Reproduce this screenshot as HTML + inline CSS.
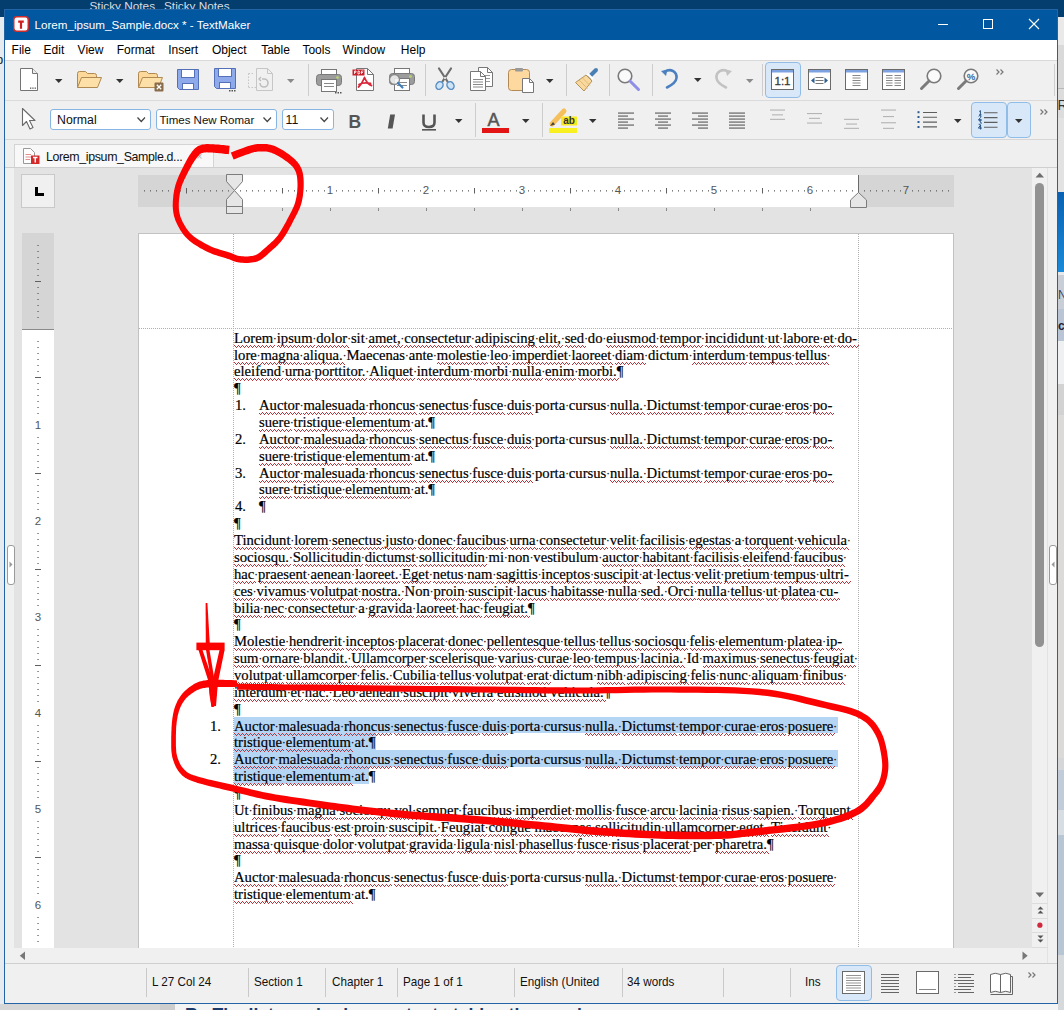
<!DOCTYPE html>
<html><head><meta charset="utf-8"><title>TextMaker</title><style>
*{margin:0;padding:0;box-sizing:border-box}
html,body{width:1064px;height:1010px;overflow:hidden}
body{position:relative;background:#dad8d6;font-family:"Liberation Sans",sans-serif}
.a{position:absolute}
.t{position:absolute;white-space:pre}
svg{overflow:visible}
.dl{position:absolute;white-space:pre;font-family:"Liberation Serif",serif;font-size:14.667px;line-height:16.87px;color:#000;-webkit-text-stroke:0.2px #000}
.dl u{text-decoration:none}
.dl b{font-weight:normal;font-size:11.005px;position:relative;top:-0.5px}
</style></head><body>
<div class="a" style="left:0px;top:0px;width:1064px;height:17px;background:#043e6e"></div>
<div class="t" style="left:89.50px;top:-0.59px;font-size:11.8px;line-height:15px;color:#d6dee6;font-family:'Liberation Sans',sans-serif;">Sticky Notes</div>
<div class="t" style="left:164.00px;top:-0.59px;font-size:11.8px;line-height:15px;color:#d6dee6;font-family:'Liberation Sans',sans-serif;">Sticky Notes</div>
<div class="a" style="left:0px;top:17px;width:4px;height:993px;background:#e6ebf0"></div>
<div class="a" style="left:0;top:40px;width:4px;height:30px;overflow:hidden"><div class="t" style="left:-4px;top:11px;font-size:13px;line-height:17px;color:#222;font-family:'Liberation Sans',sans-serif">p</div></div>
<div class="a" style="left:1058px;top:17px;width:6px;height:28px;background:#e9e9e9"></div>
<div class="a" style="left:1058px;top:45px;width:6px;height:43px;background:#d9d9d9"></div>
<div class="a" style="left:1058px;top:88px;width:6px;height:1px;background:#b8b8b8"></div>
<div class="a" style="left:1058px;top:89px;width:6px;height:29px;background:#dcdcdc"></div>
<div class="a" style="left:1058px;top:118px;width:6px;height:74px;background:#e2e2e2"></div>
<div class="a" style="left:1058px;top:192px;width:6px;height:80px;background:linear-gradient(#0a60b0,#1a8ad8)"></div>
<div class="a" style="left:1058px;top:272px;width:6px;height:3px;background:#e8e8e8"></div>
<div class="a" style="left:1058px;top:275px;width:6px;height:34px;background:#c9ced6"></div>
<div class="a" style="left:1058px;top:309px;width:6px;height:32px;background:#b9c5d5"></div>
<div class="a" style="left:1058px;top:341px;width:6px;height:43px;background:#eef0f2"></div>
<div class="a" style="left:1058px;top:384px;width:6px;height:31px;background:#d2d2d2"></div>
<div class="a" style="left:1058px;top:415px;width:6px;height:343px;background:#dcdad8"></div>
<div class="a" style="left:1058px;top:758px;width:6px;height:12px;background:#d4d6d8"></div>
<div class="a" style="left:1058px;top:770px;width:6px;height:40px;background:#c2ccd8"></div>
<div class="a" style="left:1058px;top:810px;width:6px;height:25px;background:#d8dde2"></div>
<div class="a" style="left:1058px;top:835px;width:6px;height:120px;background:#b8c6d4"></div>
<div class="a" style="left:1058px;top:955px;width:6px;height:55px;background:#d6d9dc"></div>
<div class="t" style="left:1057.50px;top:95.65px;font-size:14px;line-height:18px;color:#333;font-family:'Liberation Sans',sans-serif;">R</div>
<div class="t" style="left:1058.00px;top:286.84px;font-size:12px;line-height:16px;color:#445;font-family:'Liberation Sans',sans-serif;">N</div>
<div class="t" style="left:1058.00px;top:317.84px;font-size:12px;line-height:16px;color:#223;font-family:'Liberation Sans',sans-serif;font-weight:bold">c</div>
<div class="a" style="left:0px;top:1004px;width:160px;height:6px;background:#d6d6d6"></div>
<div class="a" style="left:160px;top:1004px;width:15px;height:6px;background:#cdcdcd"></div>
<div class="a" style="left:175px;top:1004px;width:883px;height:6px;background:#f4f4f4"></div>
<div class="t" style="left:185.00px;top:1004.40px;font-size:17.6px;line-height:23px;color:#1d3b6a;font-family:'Liberation Sans',sans-serif;font-weight:bold">Re The list numbering contents tables the numb</div>
<div class="a" style="left:4px;top:9px;width:1054px;height:995px;background:#f0f0f0;border:1px solid #2464a4"></div>
<div class="a" style="left:5px;top:10px;width:1052px;height:30px;background:#0157a0"></div>
<svg class="a" style="left:13px;top:16px;" width="16" height="16" viewBox="0 0 16 16"><rect x="0.75" y="0.75" width="14.5" height="14.5" rx="3" fill="#fff" stroke="#d02c2c" stroke-width="1.5"/><path d="M5.2 4.5h5.6v2.2H9.1v6H6.9v-6H5.2z" fill="#d01f1f"/></svg>
<div class="t" style="left:34.50px;top:17.06px;font-size:11.65px;line-height:15px;color:#fff;font-family:'Liberation Sans',sans-serif;">Lorem_ipsum_Sample.docx * - TextMaker</div>
<div class="a" style="left:938px;top:24px;width:10px;height:1px;background:#fff"></div>
<div class="a" style="left:983px;top:19px;width:10px;height:10px;border:1px solid #fff"></div>
<svg class="a" style="left:1029px;top:19px;" width="10" height="10" viewBox="0 0 10 10"><path d="M0 0L10 10M10 0L0 10" stroke="#fff" stroke-width="1.1"/></svg>
<div class="a" style="left:5px;top:40px;width:1052px;height:20px;background:#fff"></div>
<div class="a" style="left:5px;top:60px;width:1052px;height:1px;background:#d9d9d9"></div>
<div class="t" style="left:11.60px;top:41.84px;font-size:12px;line-height:16px;color:#000;font-family:'Liberation Sans',sans-serif;">File</div>
<div class="t" style="left:43.60px;top:41.84px;font-size:12px;line-height:16px;color:#000;font-family:'Liberation Sans',sans-serif;">Edit</div>
<div class="t" style="left:77.60px;top:41.84px;font-size:12px;line-height:16px;color:#000;font-family:'Liberation Sans',sans-serif;">View</div>
<div class="t" style="left:116.70px;top:41.84px;font-size:12px;line-height:16px;color:#000;font-family:'Liberation Sans',sans-serif;">Format</div>
<div class="t" style="left:168.20px;top:41.84px;font-size:12px;line-height:16px;color:#000;font-family:'Liberation Sans',sans-serif;">Insert</div>
<div class="t" style="left:211.90px;top:41.84px;font-size:12px;line-height:16px;color:#000;font-family:'Liberation Sans',sans-serif;">Object</div>
<div class="t" style="left:261.20px;top:41.84px;font-size:12px;line-height:16px;color:#000;font-family:'Liberation Sans',sans-serif;">Table</div>
<div class="t" style="left:302.40px;top:41.84px;font-size:12px;line-height:16px;color:#000;font-family:'Liberation Sans',sans-serif;">Tools</div>
<div class="t" style="left:342.60px;top:41.84px;font-size:12px;line-height:16px;color:#000;font-family:'Liberation Sans',sans-serif;">Window</div>
<div class="t" style="left:400.80px;top:41.84px;font-size:12px;line-height:16px;color:#000;font-family:'Liberation Sans',sans-serif;">Help</div>
<div class="a" style="left:5px;top:100px;width:1052px;height:1px;background:#dadada"></div>
<div class="a" style="left:5px;top:139px;width:1052px;height:1px;background:#d6d6d6"></div>
<svg class="a" style="left:19px;top:67px;" width="20" height="25" viewBox="0 0 20 25"><path d="M1.5 1.5H13.5L18.5 6.5V23.5H1.5Z" fill="#fff" stroke="#747474" stroke-width="1"/><path d="M13.5 1.5V6.5H18.5" fill="#eee" stroke="#747474" stroke-width="1"/><rect x="11" y="20.5" width="1.3" height="1.3" fill="#555"/><rect x="13.3" y="20.5" width="1.3" height="1.3" fill="#555"/><rect x="15.6" y="20.5" width="1.3" height="1.3" fill="#555"/></svg>
<svg class="a" style="left:55px;top:79px;" width="8" height="5" viewBox="0 0 8 5"><path d="M0 0H7.5L3.75 4z" fill="#333"/></svg>
<svg class="a" style="left:76px;top:70px;" width="27" height="20" viewBox="0 0 27 20"><path d="M1.5 17.5V3.5Q1.5 1.5 3.5 1.5H9.5L11.5 3.5H18.5Q20.5 3.5 20.5 5.5V7.5" fill="#fcd99a" stroke="#b08a52" stroke-width="1"/><path d="M1.5 17.5L5.5 7.5H25.5L21.5 17.5Z" fill="#fde0a8" stroke="#b08a52" stroke-width="1" stroke-linejoin="round"/></svg>
<svg class="a" style="left:116px;top:79px;" width="8" height="5" viewBox="0 0 8 5"><path d="M0 0H7.5L3.75 4z" fill="#333"/></svg>
<svg class="a" style="left:137px;top:70px;" width="28" height="22" viewBox="0 0 28 22"><path d="M1.5 17.5V3.5Q1.5 1.5 3.5 1.5H9.5L11.5 3.5H18.5Q20.5 3.5 20.5 5.5V7.5" fill="#fcd99a" stroke="#b08a52"/><path d="M1.5 17.5L5.5 7.5H25.5L21.5 17.5Z" fill="#fde0a8" stroke="#b08a52" stroke-linejoin="round"/><rect x="17.5" y="12.5" width="9" height="9" rx="1" fill="#8a6c4a"/><path d="M19.8 14.8L24.2 19.2M24.2 14.8L19.8 19.2" stroke="#fff" stroke-width="1.3"/></svg>
<svg class="a" style="left:176.5px;top:68.5px;" width="22" height="24" viewBox="0 0 22 24"><path d="M0.5 0.5H21.5V20.5H2.5L0.5 18.5Z" fill="#8eaaea" stroke="#5470b8"/><rect x="4.5" y="0.5" width="13" height="8" fill="#fff" stroke="#5470b8"/><rect x="5.5" y="14.5" width="11" height="6" fill="#fff" stroke="#5470b8"/></svg>
<svg class="a" style="left:213.5px;top:68px;" width="22" height="24" viewBox="0 0 22 24"><path d="M0.5 0.5H21.5V20.5H2.5L0.5 18.5Z" fill="#8eaaea" stroke="#5470b8"/><rect x="4.5" y="0.5" width="13" height="8" fill="#fff" stroke="#5470b8"/><rect x="5.5" y="14.5" width="11" height="6" fill="#fff" stroke="#5470b8"/><rect x="15" y="22" width="1.5" height="1.5" fill="#555"/><rect x="17.5" y="22" width="1.5" height="1.5" fill="#555"/><rect x="20" y="22" width="1.5" height="1.5" fill="#555"/></svg>
<svg class="a" style="left:248px;top:68px;" width="26" height="24" viewBox="0 0 26 24"><path d="M8.5 0.5H19.5L24.5 5.5V22.5H8.5Z" fill="none" stroke="#c6c6c6"/><path d="M19.5 0.5V5.5H24.5" fill="none" stroke="#c6c6c6"/><path d="M0.5 5.5H6M0.5 5.5V19.5M0.5 19.5H8" stroke="#c6c6c6" stroke-dasharray="1.5 1.5"/><path d="M12 15a4 4 0 1 0 4-4h-2" fill="none" stroke="#bdbdbd" stroke-width="1.6"/><path d="M13 9l-2 2 2 2" fill="none" stroke="#bdbdbd" stroke-width="1.4"/></svg>
<svg class="a" style="left:287px;top:79px;" width="8" height="5" viewBox="0 0 8 5"><path d="M0 0H7.5L3.75 4z" fill="#8a8a8a"/></svg>
<div class="a" style="left:308px;top:64px;width:1px;height:32px;background:#cdcdcd"></div>
<svg class="a" style="left:316px;top:68.5px;" width="27" height="25" viewBox="0 0 27 25"><rect x="5.5" y="0.5" width="15" height="7" fill="#fff" stroke="#777"/><rect x="0.5" y="5.5" width="25" height="11" rx="3" fill="#9c9c9c" stroke="#7a7a7a"/><circle cx="21.5" cy="8.5" r="1.3" fill="#b8d86a"/><rect x="5.5" y="10.5" width="15" height="12" fill="#fff" stroke="#777"/><path d="M8 14.5H18M8 17.5H18" stroke="#888"/><rect x="19" y="23" width="1.5" height="1.5" fill="#555"/><rect x="21.5" y="23" width="1.5" height="1.5" fill="#555"/><rect x="24" y="23" width="1.5" height="1.5" fill="#555"/></svg>
<svg class="a" style="left:352px;top:67px;" width="24" height="25" viewBox="0 0 24 25"><path d="M4.5 1.5H15.5L21.5 7.5V23.5H4.5Z" fill="#fff" stroke="#777"/><path d="M15.5 1.5V7.5H21.5" fill="none" stroke="#777"/><rect x="0.5" y="2.5" width="12" height="6" fill="#c8202a"/><path d="M2.5 4v3M2.5 4h1.5v1.3H2.5M6 4v3h1.2l0.6-1.5L7.2 4Z M9.5 4v3M9.5 4h2M9.5 5.5h1.5" stroke="#fff" stroke-width="0.8" fill="none"/><path d="M12.5 10.5C11 14 9 18 6.5 20M12.5 10.5C14 14 16.5 18 19.5 18.5M7 17.5C10 16 14 15.5 18.5 16.5" fill="none" stroke="#d8283a" stroke-width="1.8" stroke-linecap="round"/></svg>
<svg class="a" style="left:389px;top:68px;" width="27" height="25" viewBox="0 0 27 25"><rect x="5.5" y="0.5" width="15" height="7" fill="#fff" stroke="#777"/><rect x="0.5" y="5.5" width="25" height="11" rx="3" fill="#9c9c9c" stroke="#7a7a7a"/><circle cx="21.5" cy="8.5" r="1.3" fill="#b8d86a"/><rect x="5.5" y="10.5" width="15" height="12" fill="#fff" stroke="#777"/><path d="M8 14.5H18M8 17.5H18" stroke="#888"/><circle cx="5.5" cy="11.5" r="5" fill="#f2f2f2" fill-opacity="0.85" stroke="#888" stroke-width="1.3"/><path d="M9 15L13.5 19.5" stroke="#3d7ec0" stroke-width="2.2" stroke-linecap="round"/></svg>
<div class="a" style="left:425px;top:64px;width:1px;height:32px;background:#cdcdcd"></div>
<svg class="a" style="left:434px;top:67px;" width="22" height="24" viewBox="0 0 22 24"><path d="M5 1.5L13.5 14.5M17 1.5L8.5 14.5" stroke="#6e6e6e" stroke-width="2.2" stroke-linecap="round"/><ellipse cx="5.5" cy="18.5" rx="3.3" ry="4" transform="rotate(35 5.5 18.5)" fill="#cfe5f7" stroke="#5a8fc4" stroke-width="1.5"/><ellipse cx="16.5" cy="18.5" rx="3.3" ry="4" transform="rotate(-35 16.5 18.5)" fill="#cfe5f7" stroke="#5a8fc4" stroke-width="1.5"/><circle cx="11" cy="11" r="1" fill="#fff"/></svg>
<svg class="a" style="left:470px;top:67px;" width="24" height="25" viewBox="0 0 24 25"><path d="M8.5 0.5H17.5L22.5 5.5V19.5H8.5Z" fill="#fff" stroke="#777"/><path d="M17.5 0.5V5.5H22.5" fill="none" stroke="#777"/><path d="M11 8.5H20M11 11.5H20M11 14.5H20" stroke="#999"/><path d="M0.5 4.5H10.5L15.5 9.5V23.5H0.5Z" fill="#fff" stroke="#777"/><path d="M10.5 4.5V9.5H15.5" fill="none" stroke="#777"/><path d="M3 12.5H13M3 15H13M3 17.5H13M3 20H13" stroke="#888"/></svg>
<svg class="a" style="left:507px;top:67px;" width="28" height="27" viewBox="0 0 28 27"><rect x="1.5" y="2.5" width="21" height="21" rx="3" fill="#fdd9a0" stroke="#b28a55"/><rect x="8" y="1" width="8" height="3.5" rx="1" fill="#9a9a9a"/><path d="M15.5 11.5H22.5L26.5 15.5V25.5H15.5Z" fill="#fff" stroke="#777"/><path d="M22.5 11.5V15.5H26.5" fill="none" stroke="#777"/></svg>
<svg class="a" style="left:546px;top:79px;" width="8" height="5" viewBox="0 0 8 5"><path d="M0 0H7.5L3.75 4z" fill="#333"/></svg>
<div class="a" style="left:566px;top:64px;width:1px;height:32px;background:#cdcdcd"></div>
<svg class="a" style="left:574px;top:67px;" width="26" height="26" viewBox="0 0 26 26"><path d="M16 9L22 3" stroke="#4a7fb4" stroke-width="4" stroke-linecap="round"/><path d="M13 7.5L18.5 13" stroke="#fff" stroke-width="4"/><path d="M13.5 8.5L17.5 12.5" stroke="#aaa" stroke-width="0.8" fill="none"/><path d="M12 8L18 14L10 24L1.5 15.5Z" fill="#f8d89c" stroke="#b69258" stroke-linejoin="round"/><path d="M5 13L13.5 21.5M8 10.5L16 18.5" stroke="#d8b470" stroke-width="0.8"/></svg>
<div class="a" style="left:609px;top:64px;width:1px;height:32px;background:#cdcdcd"></div>
<svg class="a" style="left:617px;top:68px;" width="25" height="25" viewBox="0 0 25 25"><circle cx="8" cy="8" r="6.8" fill="#fafafa" stroke="#7a7a7a" stroke-width="1.6"/><path d="M13 13L21.5 21.5" stroke="#8e8ee6" stroke-width="3" stroke-linecap="round"/></svg>
<div class="a" style="left:652px;top:64px;width:1px;height:32px;background:#cdcdcd"></div>
<svg class="a" style="left:660px;top:68px;" width="20" height="21" viewBox="0 0 20 21"><path d="M5 3.5C11 0 17 4 16.5 10C16 15 11 17.5 7 19.5" fill="none" stroke="#4a80c0" stroke-width="2.6" stroke-linecap="round"/><path d="M1 3L7.5 1.5L6 8Z" fill="#4a80c0"/></svg>
<svg class="a" style="left:694px;top:78px;" width="8" height="5" viewBox="0 0 8 5"><path d="M0 0H7.5L3.75 4z" fill="#333"/></svg>
<svg class="a" style="left:713px;top:68px;" width="20" height="21" viewBox="0 0 20 21"><path d="M15 3.5C9 0 3 4 3.5 10C4 15 9 17.5 13 19.5" fill="none" stroke="#c2c2c2" stroke-width="2.6" stroke-linecap="round"/><path d="M19 3L12.5 1.5L14 8Z" fill="#c2c2c2"/></svg>
<svg class="a" style="left:746px;top:79px;" width="8" height="5" viewBox="0 0 8 5"><path d="M0 0H7.5L3.75 4z" fill="#8a8a8a"/></svg>
<div class="a" style="left:762px;top:64px;width:1px;height:32px;background:#cdcdcd"></div>
<div class="a" style="left:765px;top:62px;width:36px;height:36px;background:#d9e8f8;border:1px solid #90bce8;border-radius:4px"></div>
<svg class="a" style="left:771px;top:69px;" width="24" height="21" viewBox="0 0 24 21"><rect x="0.5" y="0.5" width="22" height="20" fill="#fff" stroke="#6a6a6a"/><rect x="1" y="1" width="21" height="2.5" fill="#7da2e2"/><text x="11.5" y="16" font-family="Liberation Sans" font-size="11.5" fill="#3a3a3a" text-anchor="middle" stroke="#3a3a3a" stroke-width="0.3">1:1</text></svg>
<svg class="a" style="left:808px;top:69px;" width="24" height="21" viewBox="0 0 24 21"><rect x="0.5" y="0.5" width="22" height="20" fill="#fff" stroke="#6a6a6a"/><rect x="1" y="1" width="21" height="2.5" fill="#7da2e2"/><path d="M3 11.5L6.5 8.5V14.5Z M20 11.5L16.5 8.5V14.5Z" fill="#2f5f8f"/><path d="M7.5 8.5H15.5M7.5 11.5H15.5M7.5 14.5H15.5" stroke="#777"/></svg>
<svg class="a" style="left:845px;top:69px;" width="24" height="21" viewBox="0 0 24 21"><rect x="0.5" y="0.5" width="22" height="20" fill="#fff" stroke="#6a6a6a"/><rect x="1" y="1" width="21" height="2.5" fill="#7da2e2"/><path d="M7.5 6.5H15.5M7.5 9H15.5M7.5 11.5H15.5M7.5 14H15.5M7.5 16.5H15.5" stroke="#888"/></svg>
<svg class="a" style="left:882px;top:69px;" width="24" height="21" viewBox="0 0 24 21"><rect x="0.5" y="0.5" width="22" height="20" fill="#fff" stroke="#6a6a6a"/><rect x="1" y="1" width="21" height="2.5" fill="#7da2e2"/><path d="M4 6.5H10.5M4 9H10.5M4 11.5H10.5M4 14H10.5M4 16.5H10.5M12.5 6.5H19M12.5 9H19M12.5 11.5H19M12.5 14H19M12.5 16.5H19" stroke="#888"/></svg>
<svg class="a" style="left:919px;top:68px;" width="24" height="24" viewBox="0 0 24 24"><circle cx="15" cy="8" r="6.8" fill="#fafafa" stroke="#7a7a7a" stroke-width="1.6"/><path d="M10 13L2.5 20.5" stroke="#7a7a7a" stroke-width="3" stroke-linecap="round"/></svg>
<svg class="a" style="left:956px;top:68px;" width="24" height="24" viewBox="0 0 24 24"><circle cx="15" cy="8" r="6.8" fill="#fafafa" stroke="#7a7a7a" stroke-width="1.6"/><path d="M10 13L2.5 20.5" stroke="#7a7a7a" stroke-width="3" stroke-linecap="round"/><text x="15" y="11.5" font-family="Liberation Sans" font-size="9.5" fill="#2f6fae" text-anchor="middle" stroke="#2f6fae" stroke-width="0.3">%</text></svg>
<svg class="a" style="left:996px;top:69px;" width="8" height="6" viewBox="0 0 8 6"><path d="M0.5 0.5L3 3L0.5 5.5M4.5 0.5L7 3L4.5 5.5" fill="none" stroke="#777" stroke-width="1.2"/></svg>
<div class="a" style="left:1054px;top:64px;width:1px;height:32px;background:#d0d0d0"></div>
<svg class="a" style="left:21px;top:107px;" width="16" height="24" viewBox="0 0 16 24"><path d="M1.5 1.5V18.5L5.5 14.5L9 22L12 20.5L8.5 13.5H14Z" fill="#fff" stroke="#6a6a6a" stroke-width="1.1" stroke-linejoin="round"/></svg>
<div class="a" style="left:50px;top:109px;width:101px;height:21px;background:#fff;border:1px solid #88b6e4;border-radius:3px"></div>
<div class="t" style="left:57.00px;top:111.74px;font-size:12.3px;line-height:16px;color:#111;font-family:'Liberation Sans',sans-serif;">Normal</div>
<svg class="a" style="left:136.5px;top:117.2px;" width="9" height="6" viewBox="0 0 9 6"><path d="M0.5 0.5L4.25 4.5L8 0.5" fill="none" stroke="#444" stroke-width="1.2"/></svg>
<div class="a" style="left:156px;top:109px;width:121px;height:21px;background:#fff;border:1px solid #88b6e4;border-radius:3px"></div>
<div class="t" style="left:159.50px;top:112.52px;font-size:11.5px;line-height:15px;color:#111;font-family:'Liberation Sans',sans-serif;">Times New Romar</div>
<svg class="a" style="left:262.5px;top:117.2px;" width="9" height="6" viewBox="0 0 9 6"><path d="M0.5 0.5L4.25 4.5L8 0.5" fill="none" stroke="#444" stroke-width="1.2"/></svg>
<div class="a" style="left:282px;top:109px;width:52px;height:21px;background:#fff;border:1px solid #88b6e4;border-radius:3px"></div>
<div class="t" style="left:285.50px;top:111.74px;font-size:12.3px;line-height:16px;color:#111;font-family:'Liberation Sans',sans-serif;">11</div>
<svg class="a" style="left:319.5px;top:117.2px;" width="9" height="6" viewBox="0 0 9 6"><path d="M0.5 0.5L4.25 4.5L8 0.5" fill="none" stroke="#444" stroke-width="1.2"/></svg>
<div class="t" style="left:348.50px;top:110.84px;font-size:17.5px;line-height:23px;color:#555;font-family:'Liberation Sans',sans-serif;font-weight:bold">B</div>
<svg class="a" style="left:386px;top:114px;" width="12" height="15" viewBox="0 0 12 15"><path d="M4.2 0.5H9L6.6 14.5H1.8Z" fill="#555"/></svg>
<svg class="a" style="left:421px;top:114px;" width="16" height="17" viewBox="0 0 16 17"><path d="M2.5 0.5V8.5Q2.5 13 8 13Q13.5 13 13.5 8.5V0.5" fill="none" stroke="#555" stroke-width="2.6"/><rect x="1" y="15" width="14" height="1.6" fill="#555"/></svg>
<svg class="a" style="left:455px;top:119px;" width="8" height="5" viewBox="0 0 8 5"><path d="M0 0H7.5L3.75 4z" fill="#333"/></svg>
<div class="a" style="left:475px;top:103px;width:1px;height:34px;background:#cdcdcd"></div>
<div class="t" style="left:487.50px;top:109.46px;font-size:18px;line-height:23px;color:#555;font-family:'Liberation Sans',sans-serif;-webkit-text-stroke:0.5px #555">A</div>
<div class="a" style="left:482px;top:128px;width:27px;height:4.5px;background:#e31414"></div>
<svg class="a" style="left:522px;top:119px;" width="8" height="5" viewBox="0 0 8 5"><path d="M0 0H7.5L3.75 4z" fill="#333"/></svg>
<div class="a" style="left:542px;top:103px;width:1px;height:34px;background:#cdcdcd"></div>
<svg class="a" style="left:548px;top:108px;" width="30" height="26" viewBox="0 0 30 26"><path d="M4 16L16 3" stroke="#f5c05c" stroke-width="5" stroke-linecap="round"/><path d="M2 18L5 14L7 16.5Z" fill="#444"/><rect x="13" y="8.5" width="16" height="9" fill="#f8ea20"/><text x="21" y="16.2" font-family="Liberation Sans" font-size="10" font-weight="bold" fill="#333" text-anchor="middle">ab</text><rect x="1" y="20" width="28" height="5" fill="#f8f020"/></svg>
<svg class="a" style="left:589px;top:119px;" width="8" height="5" viewBox="0 0 8 5"><path d="M0 0H7.5L3.75 4z" fill="#333"/></svg>
<svg class="a" style="left:617.5px;top:112px;" width="16" height="17" viewBox="0 0 16 17"><rect x="0" y="0.5" width="16" height="1.15" fill="#5e5e5e"/><rect x="0" y="3.5" width="10" height="1.15" fill="#5e5e5e"/><rect x="0" y="6.5" width="16" height="1.15" fill="#5e5e5e"/><rect x="0" y="9.5" width="10" height="1.15" fill="#5e5e5e"/><rect x="0" y="12.5" width="16" height="1.15" fill="#5e5e5e"/><rect x="0" y="15.5" width="10" height="1.15" fill="#5e5e5e"/></svg>
<svg class="a" style="left:654.5px;top:112px;" width="16" height="17" viewBox="0 0 16 17"><rect x="0.0" y="0.5" width="16" height="1.15" fill="#5e5e5e"/><rect x="3.0" y="3.5" width="10" height="1.15" fill="#5e5e5e"/><rect x="0.0" y="6.5" width="16" height="1.15" fill="#5e5e5e"/><rect x="3.0" y="9.5" width="10" height="1.15" fill="#5e5e5e"/><rect x="0.0" y="12.5" width="16" height="1.15" fill="#5e5e5e"/><rect x="3.0" y="15.5" width="10" height="1.15" fill="#5e5e5e"/></svg>
<svg class="a" style="left:691.5px;top:112px;" width="16" height="17" viewBox="0 0 16 17"><rect x="0" y="0.5" width="16" height="1.15" fill="#5e5e5e"/><rect x="6" y="3.5" width="10" height="1.15" fill="#5e5e5e"/><rect x="0" y="6.5" width="16" height="1.15" fill="#5e5e5e"/><rect x="6" y="9.5" width="10" height="1.15" fill="#5e5e5e"/><rect x="0" y="12.5" width="16" height="1.15" fill="#5e5e5e"/><rect x="6" y="15.5" width="10" height="1.15" fill="#5e5e5e"/></svg>
<svg class="a" style="left:728.5px;top:112px;" width="16" height="17" viewBox="0 0 16 17"><rect x="0" y="0.5" width="16" height="1.15" fill="#5e5e5e"/><rect x="0" y="3.5" width="16" height="1.15" fill="#5e5e5e"/><rect x="0" y="6.5" width="16" height="1.15" fill="#5e5e5e"/><rect x="0" y="9.5" width="16" height="1.15" fill="#5e5e5e"/><rect x="0" y="12.5" width="16" height="1.15" fill="#5e5e5e"/><rect x="0" y="15.5" width="16" height="1.15" fill="#5e5e5e"/></svg>
<svg class="a" style="left:770px;top:100px;" width="15" height="32" viewBox="0 0 15 32"><rect x="0" y="9.5" width="15" height="1.1" fill="#b4b4b4"/><rect x="2" y="14.299999999999997" width="11" height="1.1" fill="#b4b4b4"/><rect x="0" y="18.799999999999997" width="15" height="1.1" fill="#b4b4b4"/></svg>
<svg class="a" style="left:806.5px;top:100px;" width="15" height="32" viewBox="0 0 15 32"><rect x="0" y="13" width="15" height="1.1" fill="#b4b4b4"/><rect x="2" y="17.799999999999997" width="11" height="1.1" fill="#b4b4b4"/><rect x="0" y="22.5" width="15" height="1.1" fill="#b4b4b4"/></svg>
<svg class="a" style="left:844px;top:100px;" width="15" height="32" viewBox="0 0 15 32"><rect x="0" y="18.799999999999997" width="15" height="1.1" fill="#b4b4b4"/><rect x="2" y="23.5" width="11" height="1.1" fill="#b4b4b4"/><rect x="0" y="27.799999999999997" width="15" height="1.1" fill="#b4b4b4"/></svg>
<svg class="a" style="left:881px;top:100px;" width="15" height="32" viewBox="0 0 15 32"><rect x="0" y="9.5" width="15" height="1.1" fill="#b4b4b4"/><rect x="2" y="16" width="11" height="1.1" fill="#b4b4b4"/><rect x="0" y="22.200000000000003" width="15" height="1.1" fill="#b4b4b4"/><rect x="2" y="27.799999999999997" width="11" height="1.1" fill="#b4b4b4"/></svg>
<svg class="a" style="left:917px;top:110px;" width="21" height="19" viewBox="0 0 21 19"><rect x="0.5" y="1.2" width="2" height="2" fill="#2b5c94"/><rect x="0.5" y="6" width="2" height="2" fill="#2b5c94"/><rect x="0.5" y="11" width="2" height="2" fill="#2b5c94"/><rect x="0.5" y="16" width="2" height="2" fill="#2b5c94"/><path d="M6 2.5H20M6 7.3H20M6 12.1H20M6 16.9H20" stroke="#5e5e5e" stroke-width="1.1"/></svg>
<svg class="a" style="left:954px;top:119px;" width="8" height="5" viewBox="0 0 8 5"><path d="M0 0H7.5L3.75 4z" fill="#333"/></svg>
<div class="a" style="left:971px;top:102px;width:36px;height:36px;background:#d9e8f8;border:1px solid #90bce8;border-radius:4px"></div>
<div class="a" style="left:1007px;top:102px;width:24px;height:36px;background:#d9e8f8;border:1px solid #90bce8;border-radius:4px"></div>
<svg class="a" style="left:977px;top:109px;" width="22" height="22" viewBox="0 0 22 22"><path transform="translate(1 1.3)" d="M1.2 1.2L2.4 0.3V4.6M1 4.6H3.6" fill="none" stroke="#1f4d80" stroke-width="0.95"/><path transform="translate(1 6.1)" d="M0.6 1.2Q1.8 -0.2 3 0.9Q3.4 2 0.6 4.6H3.6" fill="none" stroke="#1f4d80" stroke-width="0.95"/><path transform="translate(1 10.9)" d="M0.6 0.4H3.2L1.8 2Q3.6 2.1 3.3 3.6Q2.6 5 0.6 4.3" fill="none" stroke="#1f4d80" stroke-width="0.95"/><path transform="translate(1 15.7)" d="M2.6 4.8V0.3L0.4 3.4H3.8" fill="none" stroke="#1f4d80" stroke-width="0.95"/><path d="M7 3.8H20.5M7 8.6H20.5M7 13.4H20.5M7 18.2H20.5" stroke="#5e5e5e" stroke-width="1.1"/></svg>
<svg class="a" style="left:1015px;top:119px;" width="8" height="5" viewBox="0 0 8 5"><path d="M0 0H7.5L3.75 4z" fill="#333"/></svg>
<svg class="a" style="left:1040px;top:109px;" width="8" height="6" viewBox="0 0 8 6"><path d="M0.5 0.5L3 3L0.5 5.5M4.5 0.5L7 3L4.5 5.5" fill="none" stroke="#777" stroke-width="1.2"/></svg>
<div class="a" style="left:5px;top:140px;width:1052px;height:27px;background:#efefef"></div>
<div class="a" style="left:5px;top:167px;width:1052px;height:1px;background:#cfcfcf"></div>
<div class="a" style="left:14px;top:144px;width:200px;height:23px;background:#f8f8f8;border:1px solid #d4d4d4;border-bottom:none"></div>
<svg class="a" style="left:22px;top:148px;" width="18" height="17" viewBox="0 0 18 17"><path d="M1.5 0.5H8.5L12.5 4.5V15.5H1.5Z" fill="#fff" stroke="#999"/><path d="M3.5 6.5H9M3.5 9H9M3.5 11.5H8" stroke="#e08080" stroke-width="0.9"/><rect x="9" y="7.5" width="8.5" height="8.5" fill="#d42a2a"/><path d="M11 9.5H15.5M13.25 9.5V14.5" stroke="#fff" stroke-width="1.4"/></svg>
<div class="t" style="left:46.00px;top:149.20px;font-size:12.4px;line-height:16px;color:#111;font-family:'Liberation Sans',sans-serif;letter-spacing:-0.36px">Lorem_ipsum_Sample.d...</div>
<div class="t" style="left:196.50px;top:149.53px;font-size:10px;line-height:13px;color:#b0b0b0;font-family:'Liberation Sans',sans-serif;">×</div>
<div class="a" style="left:14px;top:168px;width:1018px;height:780px;background:#e3e3e3"></div>
<div class="a" style="left:21px;top:174px;width:34px;height:34px;background:#f0f0f0;border:1px solid #c9c9c9"></div>
<div class="a" style="left:35px;top:187px;width:3px;height:9px;background:#000"></div>
<div class="a" style="left:35px;top:193px;width:9px;height:3px;background:#000"></div>
<div class="a" style="left:138px;top:175px;width:816px;height:32px;background:#d5d5d5"></div>
<div class="a" style="left:234px;top:175px;width:624px;height:32px;background:#fff"></div>
<svg class="a" style="left:138px;top:175px;" width="817" height="32" viewBox="0 0 817 32"><rect x="6" y="15.2" width="1" height="1.3" fill="#606060"/><rect x="12" y="15.2" width="1" height="1.3" fill="#606060"/><rect x="18" y="15.2" width="1" height="1.3" fill="#606060"/><rect x="24" y="15.2" width="1" height="1.3" fill="#606060"/><rect x="30" y="15.2" width="1" height="1.3" fill="#606060"/><rect x="36" y="15.2" width="1" height="1.3" fill="#606060"/><rect x="42" y="15.2" width="1" height="1.3" fill="#606060"/><rect x="48" y="13" width="1" height="5.5" fill="#606060"/><rect x="54" y="15.2" width="1" height="1.3" fill="#606060"/><rect x="60" y="15.2" width="1" height="1.3" fill="#606060"/><rect x="66" y="15.2" width="1" height="1.3" fill="#606060"/><rect x="72" y="15.2" width="1" height="1.3" fill="#606060"/><rect x="78" y="15.2" width="1" height="1.3" fill="#606060"/><rect x="84" y="15.2" width="1" height="1.3" fill="#606060"/><rect x="90" y="15.2" width="1" height="1.3" fill="#606060"/><rect x="102" y="15.2" width="1" height="1.3" fill="#606060"/><rect x="108" y="15.2" width="1" height="1.3" fill="#606060"/><rect x="114" y="15.2" width="1" height="1.3" fill="#606060"/><rect x="120" y="15.2" width="1" height="1.3" fill="#606060"/><rect x="126" y="15.2" width="1" height="1.3" fill="#606060"/><rect x="132" y="15.2" width="1" height="1.3" fill="#606060"/><rect x="138" y="15.2" width="1" height="1.3" fill="#606060"/><rect x="144" y="13" width="1" height="5.5" fill="#606060"/><rect x="150" y="15.2" width="1" height="1.3" fill="#606060"/><rect x="156" y="15.2" width="1" height="1.3" fill="#606060"/><rect x="162" y="15.2" width="1" height="1.3" fill="#606060"/><rect x="168" y="15.2" width="1" height="1.3" fill="#606060"/><rect x="174" y="15.2" width="1" height="1.3" fill="#606060"/><rect x="180" y="15.2" width="1" height="1.3" fill="#606060"/><rect x="186" y="15.2" width="1" height="1.3" fill="#606060"/><rect x="198" y="15.2" width="1" height="1.3" fill="#606060"/><rect x="204" y="15.2" width="1" height="1.3" fill="#606060"/><rect x="210" y="15.2" width="1" height="1.3" fill="#606060"/><rect x="216" y="15.2" width="1" height="1.3" fill="#606060"/><rect x="222" y="15.2" width="1" height="1.3" fill="#606060"/><rect x="228" y="15.2" width="1" height="1.3" fill="#606060"/><rect x="234" y="15.2" width="1" height="1.3" fill="#606060"/><rect x="240" y="13" width="1" height="5.5" fill="#606060"/><rect x="246" y="15.2" width="1" height="1.3" fill="#606060"/><rect x="252" y="15.2" width="1" height="1.3" fill="#606060"/><rect x="258" y="15.2" width="1" height="1.3" fill="#606060"/><rect x="264" y="15.2" width="1" height="1.3" fill="#606060"/><rect x="270" y="15.2" width="1" height="1.3" fill="#606060"/><rect x="276" y="15.2" width="1" height="1.3" fill="#606060"/><rect x="282" y="15.2" width="1" height="1.3" fill="#606060"/><rect x="294" y="15.2" width="1" height="1.3" fill="#606060"/><rect x="300" y="15.2" width="1" height="1.3" fill="#606060"/><rect x="306" y="15.2" width="1" height="1.3" fill="#606060"/><rect x="312" y="15.2" width="1" height="1.3" fill="#606060"/><rect x="318" y="15.2" width="1" height="1.3" fill="#606060"/><rect x="324" y="15.2" width="1" height="1.3" fill="#606060"/><rect x="330" y="15.2" width="1" height="1.3" fill="#606060"/><rect x="336" y="13" width="1" height="5.5" fill="#606060"/><rect x="342" y="15.2" width="1" height="1.3" fill="#606060"/><rect x="348" y="15.2" width="1" height="1.3" fill="#606060"/><rect x="354" y="15.2" width="1" height="1.3" fill="#606060"/><rect x="360" y="15.2" width="1" height="1.3" fill="#606060"/><rect x="366" y="15.2" width="1" height="1.3" fill="#606060"/><rect x="372" y="15.2" width="1" height="1.3" fill="#606060"/><rect x="378" y="15.2" width="1" height="1.3" fill="#606060"/><rect x="390" y="15.2" width="1" height="1.3" fill="#606060"/><rect x="396" y="15.2" width="1" height="1.3" fill="#606060"/><rect x="402" y="15.2" width="1" height="1.3" fill="#606060"/><rect x="408" y="15.2" width="1" height="1.3" fill="#606060"/><rect x="414" y="15.2" width="1" height="1.3" fill="#606060"/><rect x="420" y="15.2" width="1" height="1.3" fill="#606060"/><rect x="426" y="15.2" width="1" height="1.3" fill="#606060"/><rect x="432" y="13" width="1" height="5.5" fill="#606060"/><rect x="438" y="15.2" width="1" height="1.3" fill="#606060"/><rect x="444" y="15.2" width="1" height="1.3" fill="#606060"/><rect x="450" y="15.2" width="1" height="1.3" fill="#606060"/><rect x="456" y="15.2" width="1" height="1.3" fill="#606060"/><rect x="462" y="15.2" width="1" height="1.3" fill="#606060"/><rect x="468" y="15.2" width="1" height="1.3" fill="#606060"/><rect x="474" y="15.2" width="1" height="1.3" fill="#606060"/><rect x="486" y="15.2" width="1" height="1.3" fill="#606060"/><rect x="492" y="15.2" width="1" height="1.3" fill="#606060"/><rect x="498" y="15.2" width="1" height="1.3" fill="#606060"/><rect x="504" y="15.2" width="1" height="1.3" fill="#606060"/><rect x="510" y="15.2" width="1" height="1.3" fill="#606060"/><rect x="516" y="15.2" width="1" height="1.3" fill="#606060"/><rect x="522" y="15.2" width="1" height="1.3" fill="#606060"/><rect x="528" y="13" width="1" height="5.5" fill="#606060"/><rect x="534" y="15.2" width="1" height="1.3" fill="#606060"/><rect x="540" y="15.2" width="1" height="1.3" fill="#606060"/><rect x="546" y="15.2" width="1" height="1.3" fill="#606060"/><rect x="552" y="15.2" width="1" height="1.3" fill="#606060"/><rect x="558" y="15.2" width="1" height="1.3" fill="#606060"/><rect x="564" y="15.2" width="1" height="1.3" fill="#606060"/><rect x="570" y="15.2" width="1" height="1.3" fill="#606060"/><rect x="582" y="15.2" width="1" height="1.3" fill="#606060"/><rect x="588" y="15.2" width="1" height="1.3" fill="#606060"/><rect x="594" y="15.2" width="1" height="1.3" fill="#606060"/><rect x="600" y="15.2" width="1" height="1.3" fill="#606060"/><rect x="606" y="15.2" width="1" height="1.3" fill="#606060"/><rect x="612" y="15.2" width="1" height="1.3" fill="#606060"/><rect x="618" y="15.2" width="1" height="1.3" fill="#606060"/><rect x="624" y="13" width="1" height="5.5" fill="#606060"/><rect x="630" y="15.2" width="1" height="1.3" fill="#606060"/><rect x="636" y="15.2" width="1" height="1.3" fill="#606060"/><rect x="642" y="15.2" width="1" height="1.3" fill="#606060"/><rect x="648" y="15.2" width="1" height="1.3" fill="#606060"/><rect x="654" y="15.2" width="1" height="1.3" fill="#606060"/><rect x="660" y="15.2" width="1" height="1.3" fill="#606060"/><rect x="666" y="15.2" width="1" height="1.3" fill="#606060"/><rect x="678" y="15.2" width="1" height="1.3" fill="#606060"/><rect x="684" y="15.2" width="1" height="1.3" fill="#606060"/><rect x="690" y="15.2" width="1" height="1.3" fill="#606060"/><rect x="696" y="15.2" width="1" height="1.3" fill="#606060"/><rect x="702" y="15.2" width="1" height="1.3" fill="#606060"/><rect x="708" y="15.2" width="1" height="1.3" fill="#606060"/><rect x="714" y="15.2" width="1" height="1.3" fill="#606060"/><rect x="720" y="13" width="1" height="5.5" fill="#606060"/><rect x="726" y="15.2" width="1" height="1.3" fill="#606060"/><rect x="732" y="15.2" width="1" height="1.3" fill="#606060"/><rect x="738" y="15.2" width="1" height="1.3" fill="#606060"/><rect x="744" y="15.2" width="1" height="1.3" fill="#606060"/><rect x="750" y="15.2" width="1" height="1.3" fill="#606060"/><rect x="756" y="15.2" width="1" height="1.3" fill="#606060"/><rect x="762" y="15.2" width="1" height="1.3" fill="#606060"/><rect x="774" y="15.2" width="1" height="1.3" fill="#606060"/><rect x="780" y="15.2" width="1" height="1.3" fill="#606060"/><rect x="786" y="15.2" width="1" height="1.3" fill="#606060"/><rect x="792" y="15.2" width="1" height="1.3" fill="#606060"/><rect x="798" y="15.2" width="1" height="1.3" fill="#606060"/><rect x="804" y="15.2" width="1" height="1.3" fill="#606060"/><rect x="810" y="15.2" width="1" height="1.3" fill="#606060"/></svg>
<div class="t" style="left:326.80px;top:183.02px;font-size:11.5px;line-height:15px;color:#555;font-family:'Liberation Sans',sans-serif;">1</div>
<div class="t" style="left:422.80px;top:183.02px;font-size:11.5px;line-height:15px;color:#555;font-family:'Liberation Sans',sans-serif;">2</div>
<div class="t" style="left:518.80px;top:183.02px;font-size:11.5px;line-height:15px;color:#555;font-family:'Liberation Sans',sans-serif;">3</div>
<div class="t" style="left:614.80px;top:183.02px;font-size:11.5px;line-height:15px;color:#555;font-family:'Liberation Sans',sans-serif;">4</div>
<div class="t" style="left:710.80px;top:183.02px;font-size:11.5px;line-height:15px;color:#555;font-family:'Liberation Sans',sans-serif;">5</div>
<div class="t" style="left:806.80px;top:183.02px;font-size:11.5px;line-height:15px;color:#555;font-family:'Liberation Sans',sans-serif;">6</div>
<div class="t" style="left:902.80px;top:183.02px;font-size:11.5px;line-height:15px;color:#555;font-family:'Liberation Sans',sans-serif;">7</div>
<svg class="a" style="left:138px;top:208px;" width="817" height="4" viewBox="0 0 817 4"><rect x="144" y="0" width="1" height="3" fill="#8a8a8a"/><rect x="192" y="0" width="1" height="3" fill="#8a8a8a"/><rect x="240" y="0" width="1" height="3" fill="#8a8a8a"/><rect x="288" y="0" width="1" height="3" fill="#8a8a8a"/><rect x="336" y="0" width="1" height="3" fill="#8a8a8a"/><rect x="384" y="0" width="1" height="3" fill="#8a8a8a"/><rect x="432" y="0" width="1" height="3" fill="#8a8a8a"/><rect x="480" y="0" width="1" height="3" fill="#8a8a8a"/><rect x="528" y="0" width="1" height="3" fill="#8a8a8a"/><rect x="576" y="0" width="1" height="3" fill="#8a8a8a"/><rect x="624" y="0" width="1" height="3" fill="#8a8a8a"/><rect x="672" y="0" width="1" height="3" fill="#8a8a8a"/></svg>
<svg class="a" style="left:225px;top:174px;" width="19" height="41" viewBox="0 0 19 41"><path d="M1.5 0.5H17.5V7.5L9.5 16.5L1.5 7.5Z" fill="#e6e6e6" stroke="#7c7c7c"/><path d="M9.5 16.5L17.5 25.5V32.5H1.5V25.5Z" fill="#e6e6e6" stroke="#7c7c7c"/><rect x="1.5" y="32.5" width="16" height="7" fill="#e6e6e6" stroke="#7c7c7c"/></svg>
<div class="a" style="left:858px;top:175px;width:1px;height:18px;background:#6a6a6a"></div>
<svg class="a" style="left:850px;top:192px;" width="18" height="17" viewBox="0 0 18 17"><path d="M8.5 0.5L16.5 8V15.5H0.5V8Z" fill="#e6e6e6" stroke="#7c7c7c"/></svg>
<div class="a" style="left:22px;top:233px;width:32px;height:96px;background:#d5d5d5"></div>
<div class="a" style="left:22px;top:329px;width:32px;height:619px;background:#fff"></div>
<div class="a" style="left:22px;top:329px;width:32px;height:1px;background:#8a8a8a"></div>
<svg class="a" style="left:22px;top:233px;" width="32" height="715" viewBox="0 0 32 715"><rect x="15.4" y="12" width="1.3" height="1" fill="#606060"/><rect x="15.4" y="18" width="1.3" height="1" fill="#606060"/><rect x="15.4" y="24" width="1.3" height="1" fill="#606060"/><rect x="15.4" y="30" width="1.3" height="1" fill="#606060"/><rect x="15.4" y="36" width="1.3" height="1" fill="#606060"/><rect x="15.4" y="42" width="1.3" height="1" fill="#606060"/><rect x="13" y="48" width="6" height="1" fill="#606060"/><rect x="15.4" y="54" width="1.3" height="1" fill="#606060"/><rect x="15.4" y="60" width="1.3" height="1" fill="#606060"/><rect x="15.4" y="66" width="1.3" height="1" fill="#606060"/><rect x="15.4" y="72" width="1.3" height="1" fill="#606060"/><rect x="15.4" y="78" width="1.3" height="1" fill="#606060"/><rect x="15.4" y="84" width="1.3" height="1" fill="#606060"/><rect x="15.4" y="108" width="1.3" height="1" fill="#606060"/><rect x="15.4" y="114" width="1.3" height="1" fill="#606060"/><rect x="15.4" y="120" width="1.3" height="1" fill="#606060"/><rect x="15.4" y="126" width="1.3" height="1" fill="#606060"/><rect x="15.4" y="132" width="1.3" height="1" fill="#606060"/><rect x="15.4" y="138" width="1.3" height="1" fill="#606060"/><rect x="13" y="144" width="6" height="1" fill="#606060"/><rect x="15.4" y="150" width="1.3" height="1" fill="#606060"/><rect x="15.4" y="156" width="1.3" height="1" fill="#606060"/><rect x="15.4" y="162" width="1.3" height="1" fill="#606060"/><rect x="15.4" y="168" width="1.3" height="1" fill="#606060"/><rect x="15.4" y="174" width="1.3" height="1" fill="#606060"/><rect x="15.4" y="180" width="1.3" height="1" fill="#606060"/><rect x="15.4" y="204" width="1.3" height="1" fill="#606060"/><rect x="15.4" y="210" width="1.3" height="1" fill="#606060"/><rect x="15.4" y="216" width="1.3" height="1" fill="#606060"/><rect x="15.4" y="222" width="1.3" height="1" fill="#606060"/><rect x="15.4" y="228" width="1.3" height="1" fill="#606060"/><rect x="15.4" y="234" width="1.3" height="1" fill="#606060"/><rect x="13" y="240" width="6" height="1" fill="#606060"/><rect x="15.4" y="246" width="1.3" height="1" fill="#606060"/><rect x="15.4" y="252" width="1.3" height="1" fill="#606060"/><rect x="15.4" y="258" width="1.3" height="1" fill="#606060"/><rect x="15.4" y="264" width="1.3" height="1" fill="#606060"/><rect x="15.4" y="270" width="1.3" height="1" fill="#606060"/><rect x="15.4" y="276" width="1.3" height="1" fill="#606060"/><rect x="15.4" y="300" width="1.3" height="1" fill="#606060"/><rect x="15.4" y="306" width="1.3" height="1" fill="#606060"/><rect x="15.4" y="312" width="1.3" height="1" fill="#606060"/><rect x="15.4" y="318" width="1.3" height="1" fill="#606060"/><rect x="15.4" y="324" width="1.3" height="1" fill="#606060"/><rect x="15.4" y="330" width="1.3" height="1" fill="#606060"/><rect x="13" y="336" width="6" height="1" fill="#606060"/><rect x="15.4" y="342" width="1.3" height="1" fill="#606060"/><rect x="15.4" y="348" width="1.3" height="1" fill="#606060"/><rect x="15.4" y="354" width="1.3" height="1" fill="#606060"/><rect x="15.4" y="360" width="1.3" height="1" fill="#606060"/><rect x="15.4" y="366" width="1.3" height="1" fill="#606060"/><rect x="15.4" y="372" width="1.3" height="1" fill="#606060"/><rect x="15.4" y="396" width="1.3" height="1" fill="#606060"/><rect x="15.4" y="402" width="1.3" height="1" fill="#606060"/><rect x="15.4" y="408" width="1.3" height="1" fill="#606060"/><rect x="15.4" y="414" width="1.3" height="1" fill="#606060"/><rect x="15.4" y="420" width="1.3" height="1" fill="#606060"/><rect x="15.4" y="426" width="1.3" height="1" fill="#606060"/><rect x="13" y="432" width="6" height="1" fill="#606060"/><rect x="15.4" y="438" width="1.3" height="1" fill="#606060"/><rect x="15.4" y="444" width="1.3" height="1" fill="#606060"/><rect x="15.4" y="450" width="1.3" height="1" fill="#606060"/><rect x="15.4" y="456" width="1.3" height="1" fill="#606060"/><rect x="15.4" y="462" width="1.3" height="1" fill="#606060"/><rect x="15.4" y="468" width="1.3" height="1" fill="#606060"/><rect x="15.4" y="492" width="1.3" height="1" fill="#606060"/><rect x="15.4" y="498" width="1.3" height="1" fill="#606060"/><rect x="15.4" y="504" width="1.3" height="1" fill="#606060"/><rect x="15.4" y="510" width="1.3" height="1" fill="#606060"/><rect x="15.4" y="516" width="1.3" height="1" fill="#606060"/><rect x="15.4" y="522" width="1.3" height="1" fill="#606060"/><rect x="13" y="528" width="6" height="1" fill="#606060"/><rect x="15.4" y="534" width="1.3" height="1" fill="#606060"/><rect x="15.4" y="540" width="1.3" height="1" fill="#606060"/><rect x="15.4" y="546" width="1.3" height="1" fill="#606060"/><rect x="15.4" y="552" width="1.3" height="1" fill="#606060"/><rect x="15.4" y="558" width="1.3" height="1" fill="#606060"/><rect x="15.4" y="564" width="1.3" height="1" fill="#606060"/><rect x="15.4" y="588" width="1.3" height="1" fill="#606060"/><rect x="15.4" y="594" width="1.3" height="1" fill="#606060"/><rect x="15.4" y="600" width="1.3" height="1" fill="#606060"/><rect x="15.4" y="606" width="1.3" height="1" fill="#606060"/><rect x="15.4" y="612" width="1.3" height="1" fill="#606060"/><rect x="15.4" y="618" width="1.3" height="1" fill="#606060"/><rect x="13" y="624" width="6" height="1" fill="#606060"/><rect x="15.4" y="630" width="1.3" height="1" fill="#606060"/><rect x="15.4" y="636" width="1.3" height="1" fill="#606060"/><rect x="15.4" y="642" width="1.3" height="1" fill="#606060"/><rect x="15.4" y="648" width="1.3" height="1" fill="#606060"/><rect x="15.4" y="654" width="1.3" height="1" fill="#606060"/><rect x="15.4" y="660" width="1.3" height="1" fill="#606060"/><rect x="15.4" y="684" width="1.3" height="1" fill="#606060"/><rect x="15.4" y="690" width="1.3" height="1" fill="#606060"/><rect x="15.4" y="696" width="1.3" height="1" fill="#606060"/><rect x="15.4" y="702" width="1.3" height="1" fill="#606060"/><rect x="15.4" y="708" width="1.3" height="1" fill="#606060"/></svg>
<div class="t" style="left:34.80px;top:417.72px;font-size:11.5px;line-height:15px;color:#555;font-family:'Liberation Sans',sans-serif;">1</div>
<div class="t" style="left:34.80px;top:513.72px;font-size:11.5px;line-height:15px;color:#555;font-family:'Liberation Sans',sans-serif;">2</div>
<div class="t" style="left:34.80px;top:609.72px;font-size:11.5px;line-height:15px;color:#555;font-family:'Liberation Sans',sans-serif;">3</div>
<div class="t" style="left:34.80px;top:705.72px;font-size:11.5px;line-height:15px;color:#555;font-family:'Liberation Sans',sans-serif;">4</div>
<div class="t" style="left:34.80px;top:801.72px;font-size:11.5px;line-height:15px;color:#555;font-family:'Liberation Sans',sans-serif;">5</div>
<div class="t" style="left:34.80px;top:897.72px;font-size:11.5px;line-height:15px;color:#555;font-family:'Liberation Sans',sans-serif;">6</div>
<div class="a" style="left:138px;top:233px;width:816px;height:715px;background:#fff;border:1px solid #c2c2c2;border-bottom:none"></div>
<div class="a" style="left:233px;top:234px;width:1px;height:714px;background:repeating-linear-gradient(to bottom,#b0b0b0 0 1px,transparent 1px 2px)"></div>
<div class="a" style="left:858px;top:234px;width:1px;height:714px;background:repeating-linear-gradient(to bottom,#b0b0b0 0 1px,transparent 1px 2px)"></div>
<div class="a" style="left:139px;top:328px;width:814px;height:1px;background:repeating-linear-gradient(to right,#b0b0b0 0 1px,transparent 1px 2px)"></div>
<div class="a" style="left:234px;top:717px;width:604px;height:16px;background:#b5d5f5"></div>
<div class="a" style="left:234px;top:733px;width:142px;height:17px;background:#b5d5f5"></div>
<div class="a" style="left:234px;top:750px;width:604px;height:17px;background:#b5d5f5"></div>
<div class="a" style="left:234px;top:767px;width:135px;height:17px;background:#b5d5f5"></div>
<div class="dl" id="L0" style="left:234px;top:329.715px"><u>Lorem</u><b>·</b><u>ipsum</u><b>·</b><u>dolor</u><b>·</b>sit<b>·</b><u>amet,</u><b>·</b><u>consectetur</u><b>·</b><u>adipiscing</u><b>·</b><u>elit,</u><b>·</b><u>sed</u><b>·</b>do<b>·</b><u>eiusmod</u><b>·</b><u>tempor</u><b>·</b><u>incididunt</u><b>·</b><u>ut</u><b>·</b><u>labore</u><b>·</b><u>et</u><b>·</b><u>do-</u></div>
<div class="dl" id="L1" style="left:234px;top:346.715px"><u>lore</u><b>·</b><u>magna</u><b>·</b><u>aliqua.</u><b>·</b>Maecenas<b>·</b>ante<b>·</b><u>molestie</u><b>·</b><u>leo</u><b>·</b><u>imperdiet</u><b>·</b><u>laoreet</u><b>·</b><u>diam</u><b>·</b>dictum<b>·</b><u>interdum</u><b>·</b><u>tempus</u><b>·</b><u>tellus</u><b>·</b></div>
<div class="dl" id="L2" style="left:234px;top:362.715px"><u>eleifend</u><b>·</b><u>urna</u><b>·</b><u>porttitor.</u><b>·</b><u>Aliquet</u><b>·</b><u>interdum</u><b>·</b><u>morbi</u><b>·</b><u>nulla</u><b>·</b><u>enim</u><b>·</b><u>morbi.</u>¶</div>
<div class="dl" id="L3" style="left:234px;top:379.715px">¶</div>
<div class="dl" style="left:235px;top:396.72px">1.</div>
<div class="dl" id="L4" style="left:259px;top:396.715px"><u>Auctor</u><b>·</b><u>malesuada</u><b>·</b><u>rhoncus</u><b>·</b><u>senectus</u><b>·</b><u>fusce</u><b>·</b><u>duis</u><b>·</b>porta<b>·</b>cursus<b>·</b><u>nulla.</u><b>·</b><u>Dictumst</u><b>·</b><u>tempor</u><b>·</b><u>curae</u><b>·</b><u>eros</u><b>·</b><u>po-</u></div>
<div class="dl" id="L5" style="left:259px;top:413.715px"><u>suere</u><b>·</b><u>tristique</u><b>·</b><u>elementum</u><b>·</b>at.¶</div>
<div class="dl" style="left:235px;top:430.72px">2.</div>
<div class="dl" id="L6" style="left:259px;top:430.715px"><u>Auctor</u><b>·</b><u>malesuada</u><b>·</b><u>rhoncus</u><b>·</b><u>senectus</u><b>·</b><u>fusce</u><b>·</b><u>duis</u><b>·</b>porta<b>·</b>cursus<b>·</b><u>nulla.</u><b>·</b><u>Dictumst</u><b>·</b><u>tempor</u><b>·</b><u>curae</u><b>·</b><u>eros</u><b>·</b><u>po-</u></div>
<div class="dl" id="L7" style="left:259px;top:447.715px"><u>suere</u><b>·</b><u>tristique</u><b>·</b><u>elementum</u><b>·</b>at.¶</div>
<div class="dl" style="left:235px;top:464.72px">3.</div>
<div class="dl" id="L8" style="left:259px;top:464.715px"><u>Auctor</u><b>·</b><u>malesuada</u><b>·</b><u>rhoncus</u><b>·</b><u>senectus</u><b>·</b><u>fusce</u><b>·</b><u>duis</u><b>·</b>porta<b>·</b>cursus<b>·</b><u>nulla.</u><b>·</b><u>Dictumst</u><b>·</b><u>tempor</u><b>·</b><u>curae</u><b>·</b><u>eros</u><b>·</b><u>po-</u></div>
<div class="dl" id="L9" style="left:259px;top:480.715px"><u>suere</u><b>·</b><u>tristique</u><b>·</b><u>elementum</u><b>·</b>at.¶</div>
<div class="dl" style="left:235px;top:497.72px">4.</div>
<div class="dl" id="L10" style="left:259px;top:497.715px">¶</div>
<div class="dl" id="L11" style="left:234px;top:514.715px">¶</div>
<div class="dl" id="L12" style="left:234px;top:531.715px"><u>Tincidunt</u><b>·</b><u>lorem</u><b>·</b><u>senectus</u><b>·</b><u>justo</u><b>·</b><u>donec</u><b>·</b><u>faucibus</u><b>·</b><u>urna</u><b>·</b><u>consectetur</u><b>·</b><u>velit</u><b>·</b><u>facilisis</u><b>·</b><u>egestas</u><b>·</b>a<b>·</b><u>torquent</u><b>·</b><u>vehicula</u><b>·</b></div>
<div class="dl" id="L13" style="left:234px;top:548.715px"><u>sociosqu.</u><b>·</b><u>Sollicitudin</u><b>·</b><u>dictumst</u><b>·</b><u>sollicitudin</u><b>·</b>mi<b>·</b>non<b>·</b>vestibulum<b>·</b><u>auctor</u><b>·</b><u>habitant</u><b>·</b><u>facilisis</u><b>·</b><u>eleifend</u><b>·</b><u>faucibus</u><b>·</b></div>
<div class="dl" id="L14" style="left:234px;top:565.715px"><u>hac</u><b>·</b><u>praesent</u><b>·</b><u>aenean</u><b>·</b><u>laoreet.</u><b>·</b><u>Eget</u><b>·</b><u>netus</u><b>·</b><u>nam</u><b>·</b><u>sagittis</u><b>·</b><u>inceptos</u><b>·</b><u>suscipit</u><b>·</b>at<b>·</b><u>lectus</u><b>·</b><u>velit</u><b>·</b><u>pretium</u><b>·</b><u>tempus</u><b>·</b><u>ultri-</u></div>
<div class="dl" id="L15" style="left:234px;top:582.715px"><u>ces</u><b>·</b><u>vivamus</u><b>·</b><u>volutpat</u><b>·</b><u>nostra.</u><b>·</b>Non<b>·</b><u>proin</u><b>·</b><u>suscipit</u><b>·</b><u>lacus</u><b>·</b><u>habitasse</u><b>·</b><u>nulla</u><b>·</b><u>sed.</u><b>·</b><u>Orci</u><b>·</b><u>nulla</u><b>·</b><u>tellus</u><b>·</b><u>ut</u><b>·</b><u>platea</u><b>·</b><u>cu-</u></div>
<div class="dl" id="L16" style="left:234px;top:599.715px"><u>bilia</u><b>·</b><u>nec</u><b>·</b><u>consectetur</u><b>·</b>a<b>·</b><u>gravida</u><b>·</b><u>laoreet</u><b>·</b><u>hac</u><b>·</b><u>feugiat.</u>¶</div>
<div class="dl" id="L17" style="left:234px;top:615.715px">¶</div>
<div class="dl" id="L18" style="left:234px;top:632.715px"><u>Molestie</u><b>·</b><u>hendrerit</u><b>·</b><u>inceptos</u><b>·</b><u>placerat</u><b>·</b><u>donec</u><b>·</b><u>pellentesque</u><b>·</b><u>tellus</u><b>·</b><u>tellus</u><b>·</b><u>sociosqu</u><b>·</b><u>felis</u><b>·</b><u>elementum</u><b>·</b><u>platea</u><b>·</b><u>ip-</u></div>
<div class="dl" id="L19" style="left:234px;top:649.715px"><u>sum</u><b>·</b><u>ornare</u><b>·</b><u>blandit.</u><b>·</b><u>Ullamcorper</u><b>·</b><u>scelerisque</u><b>·</b><u>varius</u><b>·</b><u>curae</u><b>·</b><u>leo</u><b>·</b><u>tempus</u><b>·</b><u>lacinia.</u><b>·</b>Id<b>·</b><u>maximus</u><b>·</b><u>senectus</u><b>·</b><u>feugiat</u><b>·</b></div>
<div class="dl" id="L20" style="left:234px;top:666.715px"><u>volutpat</u><b>·</b><u>ullamcorper</u><b>·</b><u>felis.</u><b>·</b><u>Cubilia</u><b>·</b><u>tellus</u><b>·</b><u>volutpat</u><b>·</b><u>erat</u><b>·</b>dictum<b>·</b><u>nibh</u><b>·</b><u>adipiscing</u><b>·</b><u>felis</u><b>·</b><u>nunc</u><b>·</b><u>aliquam</u><b>·</b><u>finibus</u><b>·</b></div>
<div class="dl" id="L21" style="left:234px;top:683.715px"><u>interdum</u><b>·</b><u>et</u><b>·</b><u>hac.</u><b>·</b><u>Leo</u><b>·</b><u>aenean</u><b>·</b><u>suscipit</u><b>·</b><u>viverra</u><b>·</b><u>euismod</u><b>·</b><u>vehicula.</u>¶</div>
<div class="dl" id="L22" style="left:234px;top:700.715px">¶</div>
<div class="dl" style="left:210px;top:717.72px">1.</div>
<div class="dl" id="L23" style="left:234px;top:717.715px"><u>Auctor</u><b>·</b><u>malesuada</u><b>·</b><u>rhoncus</u><b>·</b><u>senectus</u><b>·</b><u>fusce</u><b>·</b><u>duis</u><b>·</b>porta<b>·</b>cursus<b>·</b><u>nulla.</u><b>·</b><u>Dictumst</u><b>·</b><u>tempor</u><b>·</b><u>curae</u><b>·</b><u>eros</u><b>·</b><u>posuere</u><b>·</b></div>
<div class="dl" id="L24" style="left:234px;top:733.715px"><u>tristique</u><b>·</b><u>elementum</u><b>·</b>at.¶</div>
<div class="dl" style="left:210px;top:750.72px">2.</div>
<div class="dl" id="L25" style="left:234px;top:750.715px"><u>Auctor</u><b>·</b><u>malesuada</u><b>·</b><u>rhoncus</u><b>·</b><u>senectus</u><b>·</b><u>fusce</u><b>·</b><u>duis</u><b>·</b>porta<b>·</b>cursus<b>·</b><u>nulla.</u><b>·</b><u>Dictumst</u><b>·</b><u>tempor</u><b>·</b><u>curae</u><b>·</b><u>eros</u><b>·</b><u>posuere</u><b>·</b></div>
<div class="dl" id="L26" style="left:234px;top:767.715px"><u>tristique</u><b>·</b><u>elementum</u><b>·</b>at.¶</div>
<div class="dl" id="L27" style="left:234px;top:784.715px">¶</div>
<div class="dl" id="L28" style="left:234px;top:801.715px">Ut<b>·</b><u>finibus</u><b>·</b><u>magna</u><b>·</b><u>sociosqu</u><b>·</b><u>vel</u><b>·</b><u>semper</u><b>·</b><u>faucibus</u><b>·</b><u>imperdiet</u><b>·</b><u>mollis</u><b>·</b><u>fusce</u><b>·</b><u>arcu</u><b>·</b><u>lacinia</u><b>·</b><u>risus</u><b>·</b><u>sapien.</u><b>·</b><u>Torquent</u><b>·</b></div>
<div class="dl" id="L29" style="left:234px;top:818.715px"><u>ultrices</u><b>·</b><u>faucibus</u><b>·</b><u>est</u><b>·</b><u>proin</u><b>·</b><u>suscipit.</u><b>·</b><u>Feugiat</u><b>·</b><u>congue</u><b>·</b><u>maecenas</u><b>·</b><u>sollicitudin</u><b>·</b><u>ullamcorper</u><b>·</b><u>eget.</u><b>·</b><u>Tincidunt</u><b>·</b></div>
<div class="dl" id="L30" style="left:234px;top:835.715px"><u>massa</u><b>·</b><u>quisque</u><b>·</b><u>dolor</u><b>·</b><u>volutpat</u><b>·</b><u>gravida</u><b>·</b><u>ligula</u><b>·</b><u>nisl</u><b>·</b><u>phasellus</u><b>·</b><u>fusce</u><b>·</b><u>risus</u><b>·</b><u>placerat</u><b>·</b>per<b>·</b><u>pharetra.</u>¶</div>
<div class="dl" id="L31" style="left:234px;top:851.715px">¶</div>
<div class="dl" id="L32" style="left:234px;top:868.715px"><u>Auctor</u><b>·</b><u>malesuada</u><b>·</b><u>rhoncus</u><b>·</b><u>senectus</u><b>·</b><u>fusce</u><b>·</b><u>duis</u><b>·</b>porta<b>·</b>cursus<b>·</b><u>nulla.</u><b>·</b><u>Dictumst</u><b>·</b><u>tempor</u><b>·</b><u>curae</u><b>·</b><u>eros</u><b>·</b><u>posuere</u><b>·</b></div>
<div class="dl" id="L33" style="left:234px;top:885.715px"><u>tristique</u><b>·</b><u>elementum</u><b>·</b>at.¶</div>
<svg class="a" style="left:0;top:0" width="1064" height="1010"><defs><pattern id="zz" width="4" height="3" patternUnits="userSpaceOnUse"><rect x="0" y="2" width="1" height="1" fill="#b8343a"/><rect x="1" y="1" width="1" height="1" fill="#b8343a"/><rect x="2" y="0" width="1" height="1" fill="#b8343a"/><rect x="3" y="1" width="1" height="1" fill="#b8343a"/></pattern></defs><g transform="translate(0 345)"><rect x="234" y="0" width="41" height="3" fill="url(#zz)"/><rect x="277" y="0" width="38" height="3" fill="url(#zz)"/><rect x="316" y="0" width="33" height="3" fill="url(#zz)"/><rect x="368" y="0" width="35" height="3" fill="url(#zz)"/><rect x="404" y="0" width="69" height="3" fill="url(#zz)"/><rect x="475" y="0" width="62" height="3" fill="url(#zz)"/><rect x="539" y="0" width="24" height="3" fill="url(#zz)"/><rect x="565" y="0" width="21" height="3" fill="url(#zz)"/><rect x="606" y="0" width="52" height="3" fill="url(#zz)"/><rect x="660" y="0" width="43" height="3" fill="url(#zz)"/><rect x="705" y="0" width="61" height="3" fill="url(#zz)"/><rect x="768" y="0" width="13" height="3" fill="url(#zz)"/><rect x="783" y="0" width="39" height="3" fill="url(#zz)"/><rect x="823" y="0" width="13" height="3" fill="url(#zz)"/><rect x="837" y="0" width="22" height="3" fill="url(#zz)"/></g><g transform="translate(0 362)"><rect x="234" y="0" width="25" height="3" fill="url(#zz)"/><rect x="260" y="0" width="42" height="3" fill="url(#zz)"/><rect x="303" y="0" width="42" height="3" fill="url(#zz)"/><rect x="437" y="0" width="51" height="3" fill="url(#zz)"/><rect x="490" y="0" width="20" height="3" fill="url(#zz)"/><rect x="512" y="0" width="58" height="3" fill="url(#zz)"/><rect x="572" y="0" width="41" height="3" fill="url(#zz)"/><rect x="615" y="0" width="31" height="3" fill="url(#zz)"/><rect x="692" y="0" width="55" height="3" fill="url(#zz)"/><rect x="749" y="0" width="44" height="3" fill="url(#zz)"/><rect x="795" y="0" width="34" height="3" fill="url(#zz)"/></g><g transform="translate(0 378)"><rect x="234" y="0" width="49" height="3" fill="url(#zz)"/><rect x="285" y="0" width="28" height="3" fill="url(#zz)"/><rect x="315" y="0" width="52" height="3" fill="url(#zz)"/><rect x="369" y="0" width="46" height="3" fill="url(#zz)"/><rect x="417" y="0" width="55" height="3" fill="url(#zz)"/><rect x="473" y="0" width="37" height="3" fill="url(#zz)"/><rect x="512" y="0" width="31" height="3" fill="url(#zz)"/><rect x="545" y="0" width="31" height="3" fill="url(#zz)"/><rect x="578" y="0" width="41" height="3" fill="url(#zz)"/></g><g transform="translate(0 395)"></g><g transform="translate(0 412)"><rect x="259" y="0" width="43" height="3" fill="url(#zz)"/><rect x="303" y="0" width="64" height="3" fill="url(#zz)"/><rect x="369" y="0" width="48" height="3" fill="url(#zz)"/><rect x="419" y="0" width="52" height="3" fill="url(#zz)"/><rect x="472" y="0" width="33" height="3" fill="url(#zz)"/><rect x="507" y="0" width="26" height="3" fill="url(#zz)"/><rect x="610" y="0" width="35" height="3" fill="url(#zz)"/><rect x="647" y="0" width="55" height="3" fill="url(#zz)"/><rect x="704" y="0" width="44" height="3" fill="url(#zz)"/><rect x="749" y="0" width="34" height="3" fill="url(#zz)"/><rect x="785" y="0" width="26" height="3" fill="url(#zz)"/><rect x="813" y="0" width="21" height="3" fill="url(#zz)"/></g><g transform="translate(0 429)"><rect x="259" y="0" width="33" height="3" fill="url(#zz)"/><rect x="294" y="0" width="50" height="3" fill="url(#zz)"/><rect x="345" y="0" width="67" height="3" fill="url(#zz)"/></g><g transform="translate(0 446)"><rect x="259" y="0" width="43" height="3" fill="url(#zz)"/><rect x="303" y="0" width="64" height="3" fill="url(#zz)"/><rect x="369" y="0" width="48" height="3" fill="url(#zz)"/><rect x="419" y="0" width="52" height="3" fill="url(#zz)"/><rect x="472" y="0" width="33" height="3" fill="url(#zz)"/><rect x="507" y="0" width="26" height="3" fill="url(#zz)"/><rect x="610" y="0" width="35" height="3" fill="url(#zz)"/><rect x="647" y="0" width="55" height="3" fill="url(#zz)"/><rect x="704" y="0" width="44" height="3" fill="url(#zz)"/><rect x="749" y="0" width="34" height="3" fill="url(#zz)"/><rect x="785" y="0" width="26" height="3" fill="url(#zz)"/><rect x="813" y="0" width="21" height="3" fill="url(#zz)"/></g><g transform="translate(0 463)"><rect x="259" y="0" width="33" height="3" fill="url(#zz)"/><rect x="294" y="0" width="50" height="3" fill="url(#zz)"/><rect x="345" y="0" width="67" height="3" fill="url(#zz)"/></g><g transform="translate(0 480)"><rect x="259" y="0" width="43" height="3" fill="url(#zz)"/><rect x="303" y="0" width="64" height="3" fill="url(#zz)"/><rect x="369" y="0" width="48" height="3" fill="url(#zz)"/><rect x="419" y="0" width="52" height="3" fill="url(#zz)"/><rect x="472" y="0" width="33" height="3" fill="url(#zz)"/><rect x="507" y="0" width="26" height="3" fill="url(#zz)"/><rect x="610" y="0" width="35" height="3" fill="url(#zz)"/><rect x="647" y="0" width="55" height="3" fill="url(#zz)"/><rect x="704" y="0" width="44" height="3" fill="url(#zz)"/><rect x="749" y="0" width="34" height="3" fill="url(#zz)"/><rect x="785" y="0" width="26" height="3" fill="url(#zz)"/><rect x="813" y="0" width="21" height="3" fill="url(#zz)"/></g><g transform="translate(0 496)"><rect x="259" y="0" width="33" height="3" fill="url(#zz)"/><rect x="294" y="0" width="50" height="3" fill="url(#zz)"/><rect x="345" y="0" width="67" height="3" fill="url(#zz)"/></g><g transform="translate(0 513)"></g><g transform="translate(0 530)"></g><g transform="translate(0 547)"><rect x="234" y="0" width="58" height="3" fill="url(#zz)"/><rect x="294" y="0" width="36" height="3" fill="url(#zz)"/><rect x="332" y="0" width="52" height="3" fill="url(#zz)"/><rect x="385" y="0" width="31" height="3" fill="url(#zz)"/><rect x="418" y="0" width="37" height="3" fill="url(#zz)"/><rect x="456" y="0" width="52" height="3" fill="url(#zz)"/><rect x="510" y="0" width="28" height="3" fill="url(#zz)"/><rect x="539" y="0" width="69" height="3" fill="url(#zz)"/><rect x="610" y="0" width="28" height="3" fill="url(#zz)"/><rect x="639" y="0" width="48" height="3" fill="url(#zz)"/><rect x="689" y="0" width="44" height="3" fill="url(#zz)"/><rect x="745" y="0" width="51" height="3" fill="url(#zz)"/><rect x="797" y="0" width="52" height="3" fill="url(#zz)"/></g><g transform="translate(0 564)"><rect x="234" y="0" width="57" height="3" fill="url(#zz)"/><rect x="293" y="0" width="70" height="3" fill="url(#zz)"/><rect x="365" y="0" width="52" height="3" fill="url(#zz)"/><rect x="419" y="0" width="68" height="3" fill="url(#zz)"/><rect x="602" y="0" width="39" height="3" fill="url(#zz)"/><rect x="642" y="0" width="50" height="3" fill="url(#zz)"/><rect x="693" y="0" width="48" height="3" fill="url(#zz)"/><rect x="743" y="0" width="49" height="3" fill="url(#zz)"/><rect x="793" y="0" width="52" height="3" fill="url(#zz)"/></g><g transform="translate(0 581)"><rect x="234" y="0" width="22" height="3" fill="url(#zz)"/><rect x="258" y="0" width="51" height="3" fill="url(#zz)"/><rect x="311" y="0" width="42" height="3" fill="url(#zz)"/><rect x="355" y="0" width="45" height="3" fill="url(#zz)"/><rect x="402" y="0" width="29" height="3" fill="url(#zz)"/><rect x="433" y="0" width="33" height="3" fill="url(#zz)"/><rect x="467" y="0" width="27" height="3" fill="url(#zz)"/><rect x="496" y="0" width="44" height="3" fill="url(#zz)"/><rect x="541" y="0" width="51" height="3" fill="url(#zz)"/><rect x="594" y="0" width="47" height="3" fill="url(#zz)"/><rect x="657" y="0" width="36" height="3" fill="url(#zz)"/><rect x="694" y="0" width="28" height="3" fill="url(#zz)"/><rect x="724" y="0" width="48" height="3" fill="url(#zz)"/><rect x="773" y="0" width="45" height="3" fill="url(#zz)"/><rect x="819" y="0" width="32" height="3" fill="url(#zz)"/></g><g transform="translate(0 598)"><rect x="234" y="0" width="21" height="3" fill="url(#zz)"/><rect x="256" y="0" width="52" height="3" fill="url(#zz)"/><rect x="310" y="0" width="50" height="3" fill="url(#zz)"/><rect x="361" y="0" width="42" height="3" fill="url(#zz)"/><rect x="434" y="0" width="32" height="3" fill="url(#zz)"/><rect x="468" y="0" width="47" height="3" fill="url(#zz)"/><rect x="517" y="0" width="32" height="3" fill="url(#zz)"/><rect x="550" y="0" width="56" height="3" fill="url(#zz)"/><rect x="608" y="0" width="31" height="3" fill="url(#zz)"/><rect x="641" y="0" width="25" height="3" fill="url(#zz)"/><rect x="668" y="0" width="28" height="3" fill="url(#zz)"/><rect x="697" y="0" width="32" height="3" fill="url(#zz)"/><rect x="730" y="0" width="34" height="3" fill="url(#zz)"/><rect x="766" y="0" width="13" height="3" fill="url(#zz)"/><rect x="781" y="0" width="37" height="3" fill="url(#zz)"/><rect x="820" y="0" width="20" height="3" fill="url(#zz)"/></g><g transform="translate(0 615)"><rect x="234" y="0" width="28" height="3" fill="url(#zz)"/><rect x="264" y="0" width="22" height="3" fill="url(#zz)"/><rect x="288" y="0" width="68" height="3" fill="url(#zz)"/><rect x="368" y="0" width="46" height="3" fill="url(#zz)"/><rect x="416" y="0" width="42" height="3" fill="url(#zz)"/><rect x="460" y="0" width="22" height="3" fill="url(#zz)"/><rect x="484" y="0" width="46" height="3" fill="url(#zz)"/></g><g transform="translate(0 631)"></g><g transform="translate(0 648)"><rect x="234" y="0" width="53" height="3" fill="url(#zz)"/><rect x="289" y="0" width="55" height="3" fill="url(#zz)"/><rect x="346" y="0" width="50" height="3" fill="url(#zz)"/><rect x="398" y="0" width="48" height="3" fill="url(#zz)"/><rect x="448" y="0" width="37" height="3" fill="url(#zz)"/><rect x="487" y="0" width="75" height="3" fill="url(#zz)"/><rect x="564" y="0" width="33" height="3" fill="url(#zz)"/><rect x="599" y="0" width="34" height="3" fill="url(#zz)"/><rect x="635" y="0" width="53" height="3" fill="url(#zz)"/><rect x="690" y="0" width="27" height="3" fill="url(#zz)"/><rect x="718" y="0" width="68" height="3" fill="url(#zz)"/><rect x="787" y="0" width="37" height="3" fill="url(#zz)"/><rect x="826" y="0" width="18" height="3" fill="url(#zz)"/></g><g transform="translate(0 665)"><rect x="234" y="0" width="26" height="3" fill="url(#zz)"/><rect x="262" y="0" width="40" height="3" fill="url(#zz)"/><rect x="303" y="0" width="47" height="3" fill="url(#zz)"/><rect x="351" y="0" width="76" height="3" fill="url(#zz)"/><rect x="429" y="0" width="67" height="3" fill="url(#zz)"/><rect x="498" y="0" width="38" height="3" fill="url(#zz)"/><rect x="537" y="0" width="34" height="3" fill="url(#zz)"/><rect x="573" y="0" width="20" height="3" fill="url(#zz)"/><rect x="594" y="0" width="45" height="3" fill="url(#zz)"/><rect x="640" y="0" width="45" height="3" fill="url(#zz)"/><rect x="703" y="0" width="55" height="3" fill="url(#zz)"/><rect x="760" y="0" width="52" height="3" fill="url(#zz)"/><rect x="813" y="0" width="43" height="3" fill="url(#zz)"/></g><g transform="translate(0 682)"><rect x="234" y="0" width="50" height="3" fill="url(#zz)"/><rect x="286" y="0" width="73" height="3" fill="url(#zz)"/><rect x="360" y="0" width="31" height="3" fill="url(#zz)"/><rect x="393" y="0" width="45" height="3" fill="url(#zz)"/><rect x="440" y="0" width="33" height="3" fill="url(#zz)"/><rect x="475" y="0" width="50" height="3" fill="url(#zz)"/><rect x="527" y="0" width="24" height="3" fill="url(#zz)"/><rect x="597" y="0" width="28" height="3" fill="url(#zz)"/><rect x="627" y="0" width="62" height="3" fill="url(#zz)"/><rect x="690" y="0" width="28" height="3" fill="url(#zz)"/><rect x="719" y="0" width="31" height="3" fill="url(#zz)"/><rect x="752" y="0" width="49" height="3" fill="url(#zz)"/><rect x="802" y="0" width="43" height="3" fill="url(#zz)"/></g><g transform="translate(0 699)"><rect x="234" y="0" width="55" height="3" fill="url(#zz)"/><rect x="291" y="0" width="12" height="3" fill="url(#zz)"/><rect x="305" y="0" width="26" height="3" fill="url(#zz)"/><rect x="333" y="0" width="24" height="3" fill="url(#zz)"/><rect x="359" y="0" width="43" height="3" fill="url(#zz)"/><rect x="403" y="0" width="47" height="3" fill="url(#zz)"/><rect x="452" y="0" width="43" height="3" fill="url(#zz)"/><rect x="497" y="0" width="52" height="3" fill="url(#zz)"/><rect x="550" y="0" width="56" height="3" fill="url(#zz)"/></g><g transform="translate(0 716)"></g><g transform="translate(0 733)"><rect x="234" y="0" width="43" height="3" fill="url(#zz)"/><rect x="278" y="0" width="64" height="3" fill="url(#zz)"/><rect x="344" y="0" width="48" height="3" fill="url(#zz)"/><rect x="394" y="0" width="52" height="3" fill="url(#zz)"/><rect x="447" y="0" width="33" height="3" fill="url(#zz)"/><rect x="482" y="0" width="26" height="3" fill="url(#zz)"/><rect x="585" y="0" width="35" height="3" fill="url(#zz)"/><rect x="622" y="0" width="55" height="3" fill="url(#zz)"/><rect x="679" y="0" width="44" height="3" fill="url(#zz)"/><rect x="724" y="0" width="34" height="3" fill="url(#zz)"/><rect x="760" y="0" width="26" height="3" fill="url(#zz)"/><rect x="788" y="0" width="47" height="3" fill="url(#zz)"/></g><g transform="translate(0 749)"><rect x="234" y="0" width="50" height="3" fill="url(#zz)"/><rect x="286" y="0" width="67" height="3" fill="url(#zz)"/></g><g transform="translate(0 766)"><rect x="234" y="0" width="43" height="3" fill="url(#zz)"/><rect x="278" y="0" width="64" height="3" fill="url(#zz)"/><rect x="344" y="0" width="48" height="3" fill="url(#zz)"/><rect x="394" y="0" width="52" height="3" fill="url(#zz)"/><rect x="447" y="0" width="33" height="3" fill="url(#zz)"/><rect x="482" y="0" width="26" height="3" fill="url(#zz)"/><rect x="585" y="0" width="35" height="3" fill="url(#zz)"/><rect x="622" y="0" width="55" height="3" fill="url(#zz)"/><rect x="679" y="0" width="44" height="3" fill="url(#zz)"/><rect x="724" y="0" width="34" height="3" fill="url(#zz)"/><rect x="760" y="0" width="26" height="3" fill="url(#zz)"/><rect x="788" y="0" width="47" height="3" fill="url(#zz)"/></g><g transform="translate(0 783)"><rect x="234" y="0" width="50" height="3" fill="url(#zz)"/><rect x="286" y="0" width="67" height="3" fill="url(#zz)"/></g><g transform="translate(0 800)"></g><g transform="translate(0 817)"><rect x="252" y="0" width="43" height="3" fill="url(#zz)"/><rect x="297" y="0" width="41" height="3" fill="url(#zz)"/><rect x="339" y="0" width="54" height="3" fill="url(#zz)"/><rect x="394" y="0" width="20" height="3" fill="url(#zz)"/><rect x="416" y="0" width="44" height="3" fill="url(#zz)"/><rect x="462" y="0" width="52" height="3" fill="url(#zz)"/><rect x="515" y="0" width="59" height="3" fill="url(#zz)"/><rect x="575" y="0" width="39" height="3" fill="url(#zz)"/><rect x="616" y="0" width="32" height="3" fill="url(#zz)"/><rect x="650" y="0" width="27" height="3" fill="url(#zz)"/><rect x="679" y="0" width="41" height="3" fill="url(#zz)"/><rect x="722" y="0" width="29" height="3" fill="url(#zz)"/><rect x="753" y="0" width="43" height="3" fill="url(#zz)"/><rect x="798" y="0" width="55" height="3" fill="url(#zz)"/></g><g transform="translate(0 834)"><rect x="234" y="0" width="45" height="3" fill="url(#zz)"/><rect x="281" y="0" width="51" height="3" fill="url(#zz)"/><rect x="334" y="0" width="18" height="3" fill="url(#zz)"/><rect x="354" y="0" width="33" height="3" fill="url(#zz)"/><rect x="389" y="0" width="50" height="3" fill="url(#zz)"/><rect x="441" y="0" width="46" height="3" fill="url(#zz)"/><rect x="488" y="0" width="45" height="3" fill="url(#zz)"/><rect x="534" y="0" width="59" height="3" fill="url(#zz)"/><rect x="595" y="0" width="68" height="3" fill="url(#zz)"/><rect x="665" y="0" width="73" height="3" fill="url(#zz)"/><rect x="739" y="0" width="30" height="3" fill="url(#zz)"/><rect x="771" y="0" width="58" height="3" fill="url(#zz)"/></g><g transform="translate(0 851)"><rect x="234" y="0" width="38" height="3" fill="url(#zz)"/><rect x="274" y="0" width="47" height="3" fill="url(#zz)"/><rect x="323" y="0" width="33" height="3" fill="url(#zz)"/><rect x="357" y="0" width="50" height="3" fill="url(#zz)"/><rect x="409" y="0" width="46" height="3" fill="url(#zz)"/><rect x="457" y="0" width="35" height="3" fill="url(#zz)"/><rect x="494" y="0" width="23" height="3" fill="url(#zz)"/><rect x="519" y="0" width="56" height="3" fill="url(#zz)"/><rect x="577" y="0" width="33" height="3" fill="url(#zz)"/><rect x="611" y="0" width="30" height="3" fill="url(#zz)"/><rect x="643" y="0" width="48" height="3" fill="url(#zz)"/><rect x="715" y="0" width="54" height="3" fill="url(#zz)"/></g><g transform="translate(0 867)"></g><g transform="translate(0 884)"><rect x="234" y="0" width="43" height="3" fill="url(#zz)"/><rect x="278" y="0" width="64" height="3" fill="url(#zz)"/><rect x="344" y="0" width="48" height="3" fill="url(#zz)"/><rect x="394" y="0" width="52" height="3" fill="url(#zz)"/><rect x="447" y="0" width="33" height="3" fill="url(#zz)"/><rect x="482" y="0" width="26" height="3" fill="url(#zz)"/><rect x="585" y="0" width="35" height="3" fill="url(#zz)"/><rect x="622" y="0" width="55" height="3" fill="url(#zz)"/><rect x="679" y="0" width="44" height="3" fill="url(#zz)"/><rect x="724" y="0" width="34" height="3" fill="url(#zz)"/><rect x="760" y="0" width="26" height="3" fill="url(#zz)"/><rect x="788" y="0" width="47" height="3" fill="url(#zz)"/></g><g transform="translate(0 901)"><rect x="234" y="0" width="50" height="3" fill="url(#zz)"/><rect x="286" y="0" width="67" height="3" fill="url(#zz)"/></g></svg>
<div class="a" style="left:1032px;top:168px;width:16px;height:795px;background:#f0f0f0"></div>
<div class="a" style="left:1047px;top:168px;width:1px;height:795px;background:#e2e2e2"></div>
<svg class="a" style="left:1035px;top:172px;" width="10" height="7" viewBox="0 0 10 7"><path d="M0.5 5.5L4.75 0.8L9 5.5Z" fill="#6e6e6e"/></svg>
<div class="a" style="left:1035px;top:183px;width:9px;height:464px;background:#929292;border-radius:4.5px"></div>
<svg class="a" style="left:1035px;top:892px;" width="10" height="7" viewBox="0 0 10 7"><path d="M0.5 0.5L4.75 5.2L9 0.5Z" fill="#6e6e6e"/></svg>
<div class="a" style="left:1032px;top:903px;width:16px;height:1px;background:#dcdcdc"></div>
<div class="a" style="left:1032px;top:918px;width:16px;height:1px;background:#dcdcdc"></div>
<div class="a" style="left:1032px;top:932px;width:16px;height:1px;background:#dcdcdc"></div>
<div class="a" style="left:1032px;top:947px;width:16px;height:1px;background:#dcdcdc"></div>
<svg class="a" style="left:1037px;top:906px;" width="7" height="8" viewBox="0 0 7 8"><path d="M0.5 3.5L3.5 0.5L6.5 3.5Z M0.5 7.5L3.5 4.5L6.5 7.5Z" fill="#555"/></svg>
<svg class="a" style="left:1036px;top:921px;" width="9" height="9" viewBox="0 0 9 9"><circle cx="3.9" cy="4.2" r="2.6" fill="#d0283c"/></svg>
<svg class="a" style="left:1037px;top:935px;" width="7" height="8" viewBox="0 0 7 8"><path d="M0.5 0.5L3.5 3.5L6.5 0.5Z M0.5 4.5L3.5 7.5L6.5 4.5Z" fill="#555"/></svg>
<div class="a" style="left:14px;top:948px;width:1018px;height:15px;background:#f0f0f0"></div>
<svg class="a" style="left:19px;top:951px;" width="7" height="10" viewBox="0 0 7 10"><path d="M6 0.5L0.8 4.75L6 9Z" fill="#777"/></svg>
<svg class="a" style="left:1022px;top:951px;" width="7" height="10" viewBox="0 0 7 10"><path d="M0.5 0.5L5.7 4.75L0.5 9Z" fill="#777"/></svg>
<div class="a" style="left:7px;top:545px;width:8px;height:40px;background:#fff;border:1px solid #9a9a9a;border-radius:3px"></div>
<svg class="a" style="left:9px;top:561px;" width="4" height="7" viewBox="0 0 4 7"><path d="M0.5 0.5L3.5 3.5L0.5 6.5Z" fill="#999"/></svg>
<div class="a" style="left:1049px;top:545px;width:8px;height:40px;background:#fff;border:1px solid #9a9a9a;border-radius:3px"></div>
<svg class="a" style="left:1051px;top:561px;" width="4" height="7" viewBox="0 0 4 7"><path d="M3.5 0.5L0.5 3.5L3.5 6.5Z" fill="#999"/></svg>
<div class="a" style="left:5px;top:963px;width:1052px;height:1px;background:#cfcfcf"></div>
<div class="a" style="left:146px;top:968px;width:1px;height:29px;background:#c9c9c9"></div>
<div class="a" style="left:248px;top:968px;width:1px;height:29px;background:#c9c9c9"></div>
<div class="a" style="left:325px;top:968px;width:1px;height:29px;background:#c9c9c9"></div>
<div class="a" style="left:397px;top:968px;width:1px;height:29px;background:#c9c9c9"></div>
<div class="a" style="left:514px;top:968px;width:1px;height:29px;background:#c9c9c9"></div>
<div class="a" style="left:622px;top:968px;width:1px;height:29px;background:#c9c9c9"></div>
<div class="a" style="left:723px;top:968px;width:1px;height:29px;background:#c9c9c9"></div>
<div class="a" style="left:790px;top:968px;width:1px;height:29px;background:#c9c9c9"></div>
<div class="t" style="left:152.00px;top:973.43px;font-size:13.2px;line-height:17px;color:#111;font-family:'Liberation Sans',sans-serif;transform:scaleX(0.885);transform-origin:0 0">L 27 Col 24</div>
<div class="t" style="left:253.50px;top:973.43px;font-size:13.2px;line-height:17px;color:#111;font-family:'Liberation Sans',sans-serif;transform:scaleX(0.885);transform-origin:0 0">Section 1</div>
<div class="t" style="left:331.50px;top:973.43px;font-size:13.2px;line-height:17px;color:#111;font-family:'Liberation Sans',sans-serif;transform:scaleX(0.885);transform-origin:0 0">Chapter 1</div>
<div class="t" style="left:402.50px;top:973.43px;font-size:13.2px;line-height:17px;color:#111;font-family:'Liberation Sans',sans-serif;transform:scaleX(0.885);transform-origin:0 0">Page 1 of 1</div>
<div class="t" style="left:519.50px;top:973.43px;font-size:13.2px;line-height:17px;color:#111;font-family:'Liberation Sans',sans-serif;transform:scaleX(0.885);transform-origin:0 0">English (United</div>
<div class="t" style="left:627.00px;top:973.43px;font-size:13.2px;line-height:17px;color:#111;font-family:'Liberation Sans',sans-serif;transform:scaleX(0.885);transform-origin:0 0">34 words</div>
<div class="t" style="left:804.50px;top:973.43px;font-size:13.2px;line-height:17px;color:#111;font-family:'Liberation Sans',sans-serif;transform:scaleX(0.885);transform-origin:0 0">Ins</div>
<div class="a" style="left:836px;top:965px;width:36px;height:36px;background:#d9e8f8;border:1px solid #90bce8;border-radius:4px"></div>
<svg class="a" style="left:842px;top:971px;" width="24" height="24" viewBox="0 0 24 24"><rect x="0.5" y="0.5" width="22" height="22" fill="#fff" stroke="#6a6a6a"/><path d="M4 4.5H19M4 7H19M4 9.5H19M4 12H19M4 14.5H19M4 17H19M4 19.5H19" stroke="#888" stroke-width="0.9"/></svg>
<svg class="a" style="left:881px;top:972px;" width="19" height="22" viewBox="0 0 19 22"><path d="M0 2.5H18M0 5.5H18M0 8.5H18M0 11.5H18M0 14.5H18M0 17.5H18M0 20.5H18" stroke="#666" stroke-width="1.2"/></svg>
<svg class="a" style="left:916px;top:971px;" width="24" height="24" viewBox="0 0 24 24"><rect x="0.5" y="0.5" width="22" height="22" fill="#fff" stroke="#6a6a6a"/><path d="M3 18.5H20" stroke="#888"/></svg>
<svg class="a" style="left:954px;top:972px;" width="21" height="22" viewBox="0 0 21 22"><path d="M4 2.5H20M4 5.5H17M0 8.5H20M4 11.5H20M4 14.5H20M0 17.5H17M4 20.5H20" stroke="#666" stroke-width="1.2" stroke-dasharray="" /><path d="M0 2.5H2M0 5.5H2M0 11.5H2M0 14.5H2M0 20.5H2" stroke="#999" stroke-width="1.2"/></svg>
<svg class="a" style="left:989px;top:971px;" width="25" height="24" viewBox="0 0 25 24"><path d="M1.5 3.5Q6 1 11.5 3.5V21.5Q6 19 1.5 21.5Z" fill="#fff" stroke="#666"/><path d="M11.5 3.5Q17 1 21.5 3.5V21.5Q17 19 11.5 21.5Z" fill="#fff" stroke="#666"/><path d="M21.5 5.5H23.5V23.5H1.5" fill="none" stroke="#666"/></svg>
<svg class="a" style="left:1028px;top:972px;" width="8" height="6" viewBox="0 0 8 6"><path d="M0.5 0.5L3 3L0.5 5.5M4.5 0.5L7 3L4.5 5.5" fill="none" stroke="#777" stroke-width="1.2"/></svg>
<svg class="a" style="left:0;top:0" width="1064" height="1010" viewBox="0 0 1064 1010"><path d="M229.6 145.8 L228.8 145.7 L227.7 145.6 L226.4 145.4 L225.0 145.2 L223.4 145.1 L221.7 144.9 L220.0 144.7 L218.3 144.6 L216.7 144.4 L215.2 144.4 L213.9 144.3 L212.5 144.3 L211.1 144.2 L209.7 144.2 L208.2 144.1 L206.8 144.1 L205.3 144.2 L203.9 144.4 L202.4 144.6 L201.0 144.9 L199.8 145.4 L198.7 145.8 L197.7 146.3 L196.7 147.0 L195.7 147.7 L194.8 148.4 L194.0 149.3 L193.3 150.2 L192.5 151.1 L191.6 152.2 L190.8 153.4 L189.8 154.8 L188.9 156.3 L188.0 157.8 L187.0 159.5 L186.1 161.2 L185.2 162.9 L184.3 164.6 L183.4 166.4 L182.6 168.1 L181.7 169.8 L180.9 171.5 L180.1 173.3 L179.2 175.1 L178.4 177.0 L177.6 178.9 L176.9 180.8 L176.2 182.8 L175.5 184.8 L175.0 186.8 L174.5 188.8 L174.1 190.9 L173.7 193.0 L173.4 195.1 L173.2 197.3 L173.0 199.4 L172.8 201.4 L172.8 203.5 L172.7 205.4 L172.8 207.3 L172.9 209.1 L173.1 210.8 L173.3 212.5 L173.6 214.1 L173.9 215.7 L174.4 217.3 L174.9 218.8 L175.4 220.4 L176.1 221.9 L176.8 223.5 L177.5 225.1 L178.4 226.7 L179.3 228.3 L180.2 230.0 L181.3 231.6 L182.4 233.3 L183.7 234.9 L185.0 236.5 L186.5 238.1 L188.0 239.6 L189.7 241.1 L191.6 242.5 L193.6 243.9 L195.6 245.3 L197.8 246.6 L199.9 247.9 L202.1 249.1 L204.2 250.2 L206.2 251.3 L208.2 252.2 L210.2 253.1 L212.3 254.0 L214.3 254.7 L216.3 255.3 L218.2 255.9 L220.1 256.5 L221.9 257.0 L223.6 257.4 L225.2 257.9 L226.7 258.4 L228.0 258.9 L229.2 259.3 L230.3 259.8 L231.5 260.3 L232.6 260.7 L233.7 261.2 L235.0 261.6 L236.3 262.0 L237.8 262.3 L239.3 262.5 L240.9 262.7 L242.6 262.8 L244.4 262.9 L246.2 262.9 L248.1 262.9 L249.9 262.8 L251.8 262.6 L253.7 262.3 L255.5 261.9 L257.3 261.4 L258.9 260.7 L260.5 259.9 L262.0 259.0 L263.3 258.0 L264.6 257.0 L265.8 255.9 L267.0 254.9 L268.2 253.8 L269.3 252.8 L270.4 251.7 L271.6 250.7 L272.9 249.6 L274.1 248.5 L275.3 247.4 L276.6 246.2 L277.9 244.9 L279.1 243.6 L280.4 242.2 L281.6 240.8 L282.8 239.2 L284.0 237.5 L285.2 235.7 L286.3 233.9 L287.5 232.0 L288.6 230.1 L289.6 228.1 L290.7 226.2 L291.7 224.3 L292.6 222.4 L293.5 220.6 L294.4 218.9 L295.3 217.3 L296.2 215.6 L297.0 214.0 L297.9 212.3 L298.6 210.6 L299.4 208.9 L300.1 207.2 L300.7 205.4 L301.3 203.5 L301.8 201.7 L302.2 199.8 L302.6 197.8 L302.9 195.9 L303.1 193.9 L303.3 192.0 L303.5 190.1 L303.6 188.2 L303.7 186.4 L303.7 184.6 L303.7 182.9 L303.7 181.2 L303.6 179.5 L303.5 177.9 L303.3 176.2 L303.1 174.6 L302.8 173.0 L302.4 171.4 L301.9 169.8 L301.3 168.3 L300.6 166.9 L299.9 165.5 L299.1 164.2 L298.2 163.0 L297.2 161.8 L296.2 160.7 L295.1 159.6 L294.0 158.5 L292.8 157.4 L291.5 156.4 L290.1 155.2 L288.5 154.1 L286.9 152.9 L285.1 151.7 L283.3 150.5 L281.5 149.4 L279.6 148.4 L277.7 147.4 L275.9 146.5 L274.1 145.8 L272.3 145.2 L270.5 144.7 L268.8 144.4 L267.0 144.1 L265.3 144.0 L263.7 143.9 L262.1 143.9 L260.5 143.9 L258.9 144.0 L257.4 144.1 L255.8 144.2 L254.2 144.5 L252.6 144.9 L251.1 145.3 L249.6 145.7 L248.2 146.1 L246.9 146.6 L245.5 147.1 L244.3 147.5 L243.0 147.9 L241.7 148.4 L240.2 148.9 L238.8 149.5 L237.4 150.0 L236.0 150.5 L234.7 151.1 L233.5 151.6 L232.4 152.0 L231.5 152.3 L230.8 152.6 L233.6 159.6 L234.3 159.3 L235.2 158.9 L236.3 158.5 L237.5 158.0 L238.7 157.5 L240.1 157.0 L241.4 156.5 L242.8 156.0 L244.1 155.5 L245.4 155.1 L246.7 154.6 L248.0 154.2 L249.3 153.7 L250.6 153.3 L251.9 152.8 L253.1 152.5 L254.4 152.1 L255.6 151.9 L256.8 151.7 L258.0 151.5 L259.4 151.4 L260.7 151.4 L262.1 151.4 L263.4 151.4 L264.8 151.4 L266.1 151.6 L267.5 151.8 L268.8 152.0 L270.2 152.4 L271.5 152.8 L273.0 153.4 L274.5 154.1 L276.2 154.9 L277.8 155.8 L279.5 156.7 L281.2 157.8 L282.8 158.8 L284.4 159.9 L285.8 160.9 L287.1 161.8 L288.3 162.8 L289.4 163.7 L290.4 164.6 L291.3 165.4 L292.2 166.3 L292.9 167.1 L293.6 168.0 L294.2 168.9 L294.8 169.9 L295.3 170.9 L295.8 172.0 L296.2 173.2 L296.5 174.4 L296.8 175.7 L297.0 177.0 L297.2 178.5 L297.3 179.9 L297.4 181.5 L297.5 183.0 L297.5 184.6 L297.5 186.2 L297.4 187.9 L297.3 189.6 L297.2 191.4 L297.0 193.2 L296.7 195.0 L296.5 196.8 L296.1 198.5 L295.7 200.2 L295.3 201.9 L294.8 203.4 L294.3 205.0 L293.7 206.5 L293.0 208.1 L292.3 209.6 L291.5 211.2 L290.7 212.8 L289.8 214.4 L289.0 216.0 L288.1 217.8 L287.1 219.5 L286.2 221.4 L285.2 223.2 L284.1 225.1 L283.1 227.0 L282.0 228.8 L281.0 230.6 L279.9 232.3 L278.8 233.9 L277.8 235.4 L276.7 236.8 L275.6 238.1 L274.5 239.3 L273.4 240.4 L272.2 241.6 L271.0 242.6 L269.8 243.7 L268.6 244.8 L267.4 245.8 L266.2 246.9 L264.9 247.9 L263.8 249.0 L262.6 250.1 L261.5 251.1 L260.5 252.0 L259.4 252.8 L258.4 253.6 L257.3 254.2 L256.2 254.8 L255.1 255.2 L253.9 255.6 L252.5 255.9 L251.0 256.1 L249.5 256.3 L247.8 256.4 L246.2 256.4 L244.5 256.4 L243.0 256.3 L241.4 256.2 L240.1 256.1 L238.9 255.9 L237.9 255.7 L236.9 255.4 L236.0 255.1 L235.0 254.7 L234.0 254.3 L232.9 253.8 L231.6 253.3 L230.3 252.8 L228.7 252.2 L227.1 251.7 L225.4 251.2 L223.6 250.7 L221.9 250.2 L220.0 249.7 L218.2 249.1 L216.4 248.5 L214.6 247.9 L212.8 247.2 L211.0 246.4 L209.1 245.5 L207.1 244.5 L205.1 243.4 L203.0 242.3 L201.0 241.1 L199.0 239.9 L197.1 238.7 L195.3 237.5 L193.6 236.2 L192.2 235.0 L190.8 233.7 L189.6 232.4 L188.4 231.1 L187.4 229.7 L186.3 228.2 L185.4 226.8 L184.5 225.3 L183.7 223.8 L182.9 222.4 L182.2 220.9 L181.6 219.5 L181.0 218.2 L180.5 216.9 L180.1 215.6 L179.8 214.3 L179.5 212.9 L179.2 211.6 L179.0 210.2 L178.9 208.7 L178.8 207.1 L178.8 205.4 L178.8 203.6 L178.9 201.8 L179.0 199.9 L179.2 197.9 L179.5 196.0 L179.8 194.0 L180.1 192.1 L180.5 190.2 L181.0 188.4 L181.5 186.6 L182.1 184.9 L182.8 183.1 L183.6 181.4 L184.3 179.6 L185.2 177.9 L186.0 176.2 L186.9 174.5 L187.8 172.8 L188.6 171.1 L189.5 169.5 L190.4 167.9 L191.3 166.2 L192.2 164.6 L193.2 163.1 L194.1 161.6 L195.0 160.2 L195.9 158.9 L196.8 157.8 L197.6 156.8 L198.3 155.9 L199.0 155.2 L199.5 154.6 L200.1 154.1 L200.5 153.8 L200.9 153.5 L201.3 153.3 L201.8 153.1 L202.5 152.9 L203.2 152.7 L203.9 152.5 L204.8 152.4 L205.8 152.4 L206.9 152.3 L208.0 152.4 L209.3 152.4 L210.6 152.5 L212.0 152.6 L213.4 152.7 L214.8 152.8 L216.1 152.9 L217.6 153.0 L219.2 153.2 L220.8 153.3 L222.4 153.5 L224.0 153.7 L225.5 153.9 L226.8 154.0 L227.9 154.1 L228.8 154.2Z" fill="#fc0303"/><path d="M237.0 680.4 L236.1 680.3 L234.9 680.2 L233.5 680.2 L231.9 680.1 L230.1 680.1 L228.4 680.0 L226.6 679.9 L224.9 679.9 L223.4 679.8 L222.0 679.8 L220.9 679.8 L219.8 679.7 L218.9 679.7 L218.0 679.7 L217.1 679.6 L216.2 679.6 L215.3 679.6 L214.3 679.6 L213.3 679.7 L212.2 679.7 L211.1 679.8 L210.0 679.9 L208.8 680.0 L207.5 680.1 L206.2 680.3 L204.9 680.4 L203.5 680.6 L202.2 680.9 L200.9 681.2 L199.6 681.6 L198.3 682.0 L197.2 682.5 L196.1 683.0 L195.0 683.6 L194.0 684.1 L193.0 684.8 L192.0 685.4 L191.0 686.0 L190.1 686.7 L189.2 687.3 L188.3 688.0 L187.4 688.7 L186.6 689.5 L185.7 690.2 L184.8 691.0 L184.0 691.8 L183.2 692.7 L182.4 693.5 L181.7 694.5 L180.9 695.4 L180.2 696.4 L179.6 697.4 L178.9 698.4 L178.3 699.5 L177.7 700.5 L177.2 701.6 L176.7 702.7 L176.2 703.8 L175.7 704.9 L175.3 706.0 L174.9 707.2 L174.5 708.3 L174.2 709.4 L173.9 710.5 L173.6 711.7 L173.4 712.8 L173.1 714.0 L172.9 715.2 L172.7 716.4 L172.5 717.6 L172.3 718.9 L172.2 720.1 L172.0 721.4 L171.9 722.6 L171.8 724.0 L171.7 725.3 L171.6 726.7 L171.5 728.2 L171.5 729.7 L171.4 731.3 L171.3 733.1 L171.3 735.0 L171.2 737.1 L171.2 739.2 L171.2 741.3 L171.2 743.5 L171.2 745.6 L171.2 747.6 L171.3 749.5 L171.4 751.2 L171.6 752.8 L171.8 754.2 L172.0 755.5 L172.2 756.7 L172.5 757.9 L172.8 758.9 L173.1 760.0 L173.5 761.0 L173.8 761.9 L174.2 762.9 L174.5 763.9 L174.9 764.8 L175.3 765.8 L175.8 766.7 L176.2 767.6 L176.7 768.4 L177.2 769.3 L177.7 770.1 L178.3 770.9 L178.9 771.7 L179.5 772.4 L180.0 773.1 L180.6 773.8 L181.3 774.5 L182.0 775.2 L182.7 775.9 L183.6 776.6 L184.5 777.3 L185.5 777.9 L186.7 778.6 L187.8 779.2 L189.0 779.7 L190.2 780.3 L191.4 780.8 L192.8 781.3 L194.2 781.8 L195.8 782.3 L197.6 782.9 L199.6 783.5 L201.8 784.1 L204.3 784.8 L207.0 785.5 L209.9 786.2 L213.1 787.0 L216.3 787.8 L219.7 788.6 L223.1 789.4 L226.6 790.2 L230.0 791.0 L233.4 791.8 L236.8 792.6 L240.0 793.4 L243.3 794.3 L246.6 795.1 L250.0 796.0 L253.5 796.8 L257.2 797.7 L261.1 798.5 L265.3 799.4 L269.7 800.2 L274.5 801.1 L279.7 802.0 L285.1 802.9 L290.8 803.7 L296.6 804.6 L302.4 805.5 L308.2 806.3 L313.9 807.1 L319.4 807.9 L324.5 808.7 L329.4 809.4 L334.1 810.0 L338.7 810.7 L343.2 811.3 L347.6 811.9 L351.9 812.4 L356.3 813.0 L360.7 813.5 L365.1 814.0 L369.6 814.6 L374.1 815.1 L378.5 815.6 L382.8 816.1 L387.1 816.5 L391.5 817.0 L395.9 817.4 L400.5 817.8 L405.3 818.3 L410.4 818.7 L415.7 819.2 L421.4 819.6 L427.3 820.1 L433.4 820.5 L439.8 820.9 L446.3 821.3 L452.9 821.8 L459.5 822.2 L466.3 822.7 L473.0 823.2 L479.7 823.7 L486.5 824.3 L493.6 825.0 L500.8 825.6 L508.2 826.3 L515.5 827.0 L522.8 827.7 L529.9 828.4 L536.8 829.1 L543.4 829.8 L549.6 830.4 L555.4 830.9 L560.7 831.5 L565.8 832.0 L570.6 832.5 L575.2 833.0 L579.9 833.5 L584.5 834.0 L589.3 834.4 L594.4 834.9 L599.7 835.3 L605.3 835.7 L611.1 836.1 L617.0 836.5 L623.0 837.0 L629.1 837.3 L635.3 837.7 L641.5 838.0 L647.7 838.3 L653.8 838.6 L659.9 838.8 L666.0 839.0 L672.4 839.1 L678.9 839.2 L685.4 839.2 L691.9 839.3 L698.2 839.3 L704.2 839.2 L710.0 839.2 L715.3 839.1 L720.1 838.9 L724.2 838.8 L727.5 838.7 L730.3 838.5 L732.7 838.3 L734.9 838.1 L737.2 837.8 L739.6 837.5 L742.5 837.1 L746.0 836.7 L750.4 836.2 L755.8 835.6 L762.0 834.9 L768.9 834.1 L776.3 833.3 L783.9 832.5 L791.6 831.5 L799.1 830.6 L806.2 829.6 L812.8 828.6 L818.7 827.5 L823.9 826.5 L828.7 825.4 L833.1 824.3 L837.3 823.1 L841.2 821.9 L844.9 820.7 L848.3 819.4 L851.6 818.0 L854.7 816.6 L857.6 815.1 L860.5 813.5 L863.1 811.7 L865.4 809.8 L867.4 807.9 L869.3 806.0 L871.0 804.1 L872.5 802.2 L873.9 800.4 L875.2 798.7 L876.5 797.1 L877.8 795.5 L879.1 794.0 L880.2 792.4 L881.3 790.9 L882.2 789.4 L883.1 787.8 L884.0 786.2 L884.7 784.5 L885.4 782.8 L886.0 781.0 L886.6 779.1 L887.0 777.2 L887.5 775.2 L887.8 773.2 L888.1 771.1 L888.3 769.0 L888.4 766.7 L888.4 764.5 L888.3 762.1 L888.1 759.7 L887.8 757.2 L887.4 754.4 L887.0 751.6 L886.4 748.7 L885.8 745.7 L885.0 742.7 L884.2 739.7 L883.2 736.8 L882.0 734.1 L880.8 731.5 L879.5 729.2 L878.1 727.0 L876.6 724.8 L875.1 722.8 L873.3 720.8 L871.4 718.9 L869.3 717.1 L866.9 715.3 L864.3 713.7 L861.5 712.1 L858.3 710.6 L855.0 709.3 L851.5 708.1 L847.9 707.0 L844.0 706.0 L840.0 704.9 L835.7 704.0 L831.3 702.9 L826.6 701.9 L821.7 700.8 L816.7 699.6 L811.5 698.3 L806.0 697.0 L800.3 695.6 L794.4 694.3 L788.2 693.0 L781.7 691.8 L774.9 690.6 L767.8 689.6 L760.3 688.8 L752.4 688.2 L744.0 687.7 L735.3 687.3 L726.2 687.0 L716.9 686.8 L707.4 686.7 L697.9 686.6 L688.5 686.5 L679.2 686.5 L670.0 686.4 L661.0 686.4 L652.1 686.4 L643.3 686.5 L634.4 686.6 L625.6 686.8 L616.7 687.0 L607.7 687.1 L598.6 687.3 L589.4 687.4 L580.0 687.4 L570.8 687.4 L561.9 687.3 L553.3 687.3 L544.6 687.2 L535.7 687.1 L526.3 687.0 L516.2 686.8 L505.3 686.7 L493.3 686.5 L480.0 686.4 L464.7 686.2 L447.3 686.1 L428.2 685.9 L408.2 685.7 L387.7 685.4 L367.4 685.2 L348.0 685.0 L329.8 684.8 L313.7 684.6 L300.0 684.5 L288.7 684.4 L278.9 684.3 L270.6 684.1 L263.4 684.1 L257.3 684.0 L252.1 683.9 L247.6 683.8 L243.7 683.8 L240.3 683.7 L237.0 683.7 L237.0 689.7 L240.2 689.7 L243.7 689.8 L247.5 689.8 L252.0 689.9 L257.2 690.0 L263.3 690.1 L270.5 690.1 L278.9 690.3 L288.6 690.4 L300.0 690.5 L313.6 690.7 L329.8 690.9 L347.9 691.1 L367.4 691.3 L387.7 691.5 L408.1 691.8 L428.2 692.0 L447.2 692.2 L464.7 692.4 L480.0 692.6 L493.2 692.7 L505.2 692.9 L516.2 693.0 L526.2 693.2 L535.6 693.3 L544.5 693.4 L553.2 693.5 L561.9 693.5 L570.8 693.6 L580.0 693.6 L589.4 693.6 L598.7 693.5 L607.8 693.3 L616.8 693.2 L625.7 693.0 L634.5 692.8 L643.4 692.7 L652.2 692.6 L661.0 692.6 L670.0 692.6 L679.1 692.7 L688.4 692.7 L697.9 692.8 L707.4 692.9 L716.8 693.1 L726.0 693.3 L735.0 693.6 L743.7 694.0 L751.9 694.5 L759.7 695.2 L767.0 696.0 L773.9 697.0 L780.6 698.1 L786.9 699.3 L793.0 700.6 L798.8 702.0 L804.5 703.4 L809.9 704.7 L815.2 706.0 L820.3 707.2 L825.2 708.3 L829.8 709.4 L834.2 710.4 L838.4 711.3 L842.4 712.3 L846.1 713.3 L849.5 714.3 L852.8 715.4 L855.8 716.6 L858.5 717.9 L861.1 719.3 L863.3 720.7 L865.3 722.1 L867.1 723.6 L868.7 725.2 L870.1 726.8 L871.5 728.6 L872.8 730.4 L874.0 732.4 L875.2 734.5 L876.3 736.7 L877.3 739.0 L878.2 741.6 L879.0 744.3 L879.7 747.1 L880.3 749.9 L880.8 752.7 L881.3 755.4 L881.6 757.9 L881.9 760.3 L882.1 762.5 L882.2 764.6 L882.2 766.6 L882.1 768.5 L881.9 770.4 L881.6 772.2 L881.3 774.0 L880.9 775.7 L880.5 777.4 L880.0 779.0 L879.5 780.6 L878.9 782.0 L878.2 783.4 L877.5 784.7 L876.8 786.0 L875.9 787.3 L875.0 788.6 L873.9 789.9 L872.8 791.4 L871.5 792.9 L870.1 794.6 L868.7 796.3 L867.3 798.0 L865.8 799.7 L864.3 801.4 L862.7 803.0 L860.9 804.6 L859.0 806.1 L856.8 807.5 L854.4 808.9 L851.6 810.2 L848.8 811.5 L845.7 812.8 L842.5 814.0 L839.0 815.2 L835.3 816.3 L831.3 817.4 L827.0 818.4 L822.4 819.5 L817.3 820.5 L811.7 821.5 L805.2 822.4 L798.1 823.4 L790.7 824.3 L783.1 825.2 L775.5 826.0 L768.2 826.8 L761.3 827.6 L755.0 828.2 L749.6 828.8 L745.2 829.3 L741.6 829.8 L738.7 830.1 L736.3 830.4 L734.1 830.7 L732.0 830.9 L729.8 831.1 L727.1 831.2 L723.9 831.3 L719.9 831.5 L715.1 831.6 L709.9 831.6 L704.2 831.7 L698.2 831.7 L691.9 831.7 L685.5 831.7 L679.0 831.6 L672.5 831.5 L666.2 831.4 L660.1 831.2 L654.1 831.0 L648.0 830.7 L641.9 830.4 L635.7 830.1 L629.6 829.8 L623.5 829.4 L617.5 829.0 L611.6 828.6 L605.9 828.1 L600.3 827.7 L595.0 827.3 L590.0 826.9 L585.3 826.4 L580.6 825.9 L576.0 825.5 L571.4 825.0 L566.6 824.5 L561.5 823.9 L556.1 823.4 L550.4 822.8 L544.1 822.2 L537.6 821.6 L530.6 820.9 L523.5 820.2 L516.2 819.5 L508.9 818.8 L501.5 818.1 L494.3 817.5 L487.2 816.8 L480.3 816.3 L473.6 815.7 L466.8 815.2 L460.0 814.8 L453.3 814.3 L446.7 813.9 L440.3 813.5 L433.9 813.1 L427.8 812.7 L421.9 812.2 L416.3 811.8 L411.0 811.4 L406.0 811.0 L401.2 810.5 L396.6 810.1 L392.2 809.7 L387.8 809.3 L383.5 808.8 L379.2 808.4 L374.9 807.9 L370.4 807.4 L365.9 806.9 L361.5 806.4 L357.2 805.9 L352.8 805.4 L348.5 804.8 L344.1 804.3 L339.7 803.7 L335.1 803.1 L330.4 802.4 L325.5 801.7 L320.3 801.0 L314.9 800.3 L309.2 799.5 L303.4 798.6 L297.6 797.8 L291.8 796.9 L286.2 796.1 L280.8 795.2 L275.6 794.4 L270.9 793.6 L266.6 792.7 L262.5 791.9 L258.7 791.1 L255.1 790.3 L251.6 789.4 L248.2 788.6 L244.9 787.8 L241.6 787.0 L238.3 786.2 L235.0 785.4 L231.5 784.6 L228.0 783.8 L224.6 783.1 L221.1 782.3 L217.8 781.5 L214.5 780.8 L211.4 780.1 L208.5 779.4 L205.8 778.7 L203.4 778.1 L201.2 777.5 L199.3 777.0 L197.6 776.5 L196.1 776.1 L194.8 775.6 L193.5 775.2 L192.4 774.8 L191.4 774.4 L190.3 773.9 L189.3 773.4 L188.4 773.0 L187.6 772.5 L186.9 772.0 L186.3 771.6 L185.8 771.1 L185.2 770.6 L184.7 770.1 L184.2 769.6 L183.7 768.9 L183.1 768.3 L182.6 767.7 L182.1 767.0 L181.6 766.4 L181.2 765.7 L180.7 765.0 L180.3 764.3 L179.9 763.6 L179.6 762.8 L179.2 762.0 L178.8 761.1 L178.5 760.2 L178.1 759.3 L177.8 758.4 L177.5 757.5 L177.2 756.6 L177.0 755.6 L176.7 754.6 L176.5 753.4 L176.3 752.2 L176.2 750.8 L176.1 749.2 L176.0 747.4 L175.9 745.5 L175.9 743.5 L175.9 741.4 L175.9 739.2 L175.9 737.1 L175.9 735.1 L176.0 733.2 L176.0 731.5 L176.1 729.9 L176.1 728.4 L176.2 727.0 L176.3 725.7 L176.5 724.4 L176.6 723.1 L176.7 721.9 L176.9 720.7 L177.1 719.6 L177.3 718.4 L177.5 717.2 L177.7 716.1 L177.9 715.0 L178.2 713.9 L178.5 712.9 L178.7 711.9 L179.0 710.9 L179.4 709.9 L179.7 708.9 L180.1 708.0 L180.5 707.0 L181.0 706.0 L181.5 705.1 L182.0 704.1 L182.5 703.2 L183.1 702.3 L183.7 701.4 L184.3 700.6 L184.9 699.8 L185.5 699.0 L186.1 698.3 L186.8 697.6 L187.5 696.9 L188.2 696.2 L189.0 695.6 L189.7 695.0 L190.5 694.4 L191.3 693.8 L192.1 693.2 L193.0 692.7 L193.8 692.1 L194.7 691.6 L195.5 691.1 L196.4 690.6 L197.2 690.1 L198.1 689.7 L199.0 689.4 L199.9 689.0 L200.7 688.7 L201.6 688.4 L202.6 688.2 L203.5 688.0 L204.6 687.9 L205.8 687.7 L206.9 687.6 L208.1 687.5 L209.3 687.5 L210.5 687.4 L211.7 687.3 L212.8 687.3 L213.7 687.2 L214.6 687.1 L215.4 687.1 L216.2 687.1 L217.0 687.0 L217.9 687.0 L218.8 687.0 L219.7 687.0 L220.8 687.0 L222.0 687.0 L223.3 687.0 L224.8 687.0 L226.5 686.9 L228.3 686.9 L230.0 686.9 L231.8 686.9 L233.4 686.9 L234.8 686.9 L236.0 686.9 L237.0 686.8Z" fill="#fc0303"/><path d="M205.6 603L207.4 603L209.8 644L205.8 644Z" fill="#fc0303"/><rect x="196.4" y="642.6" width="28.2" height="7.6" fill="#fc0303"/><path d="M198.5 650L202.5 650L212 678L214 706.5L211.5 706.5L208 680Z" fill="#fc0303"/><path d="M206 650L209.5 650L214.5 680L211 680Z" fill="#fc0303"/><path d="M219.5 650L224.6 650L218 682L216 706L212 706.5L210.5 690Z" fill="#fc0303"/><path d="M208.5 680L217.5 680L216.5 695L213.5 707L211.5 707L209.5 695Z" fill="#fc0303"/></svg>
</body></html>
